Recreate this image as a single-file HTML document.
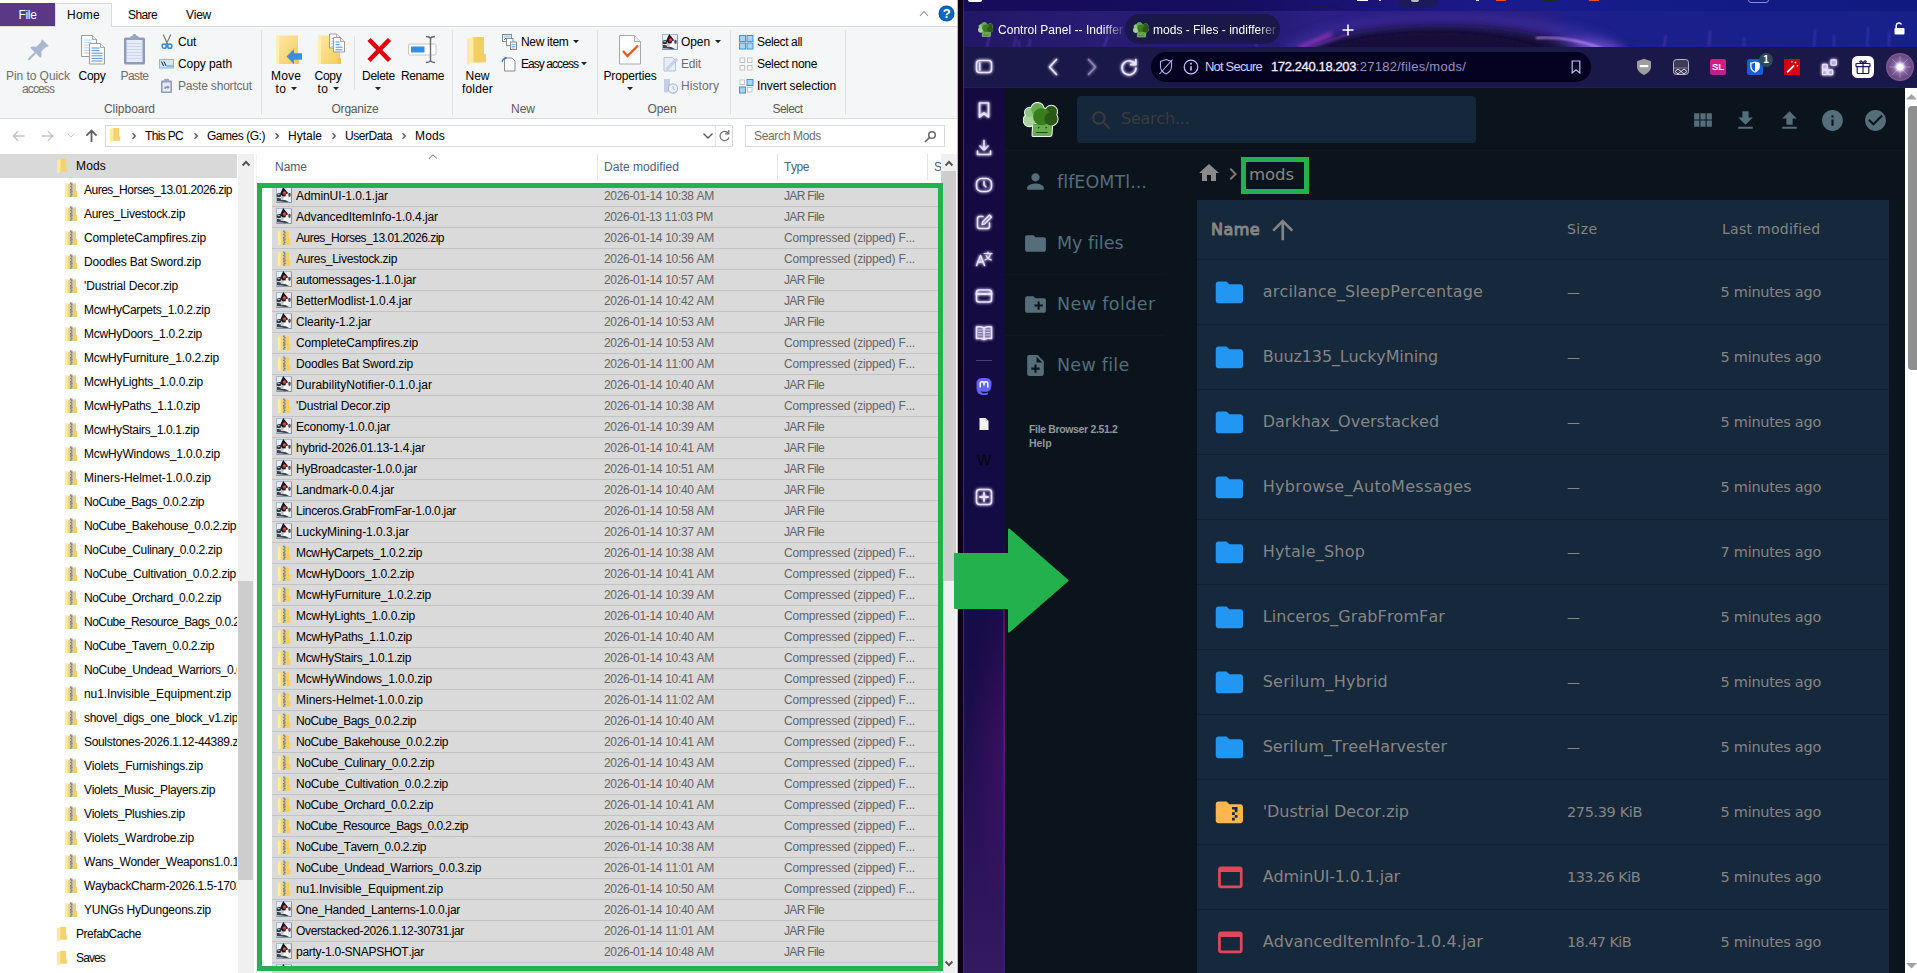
<!DOCTYPE html><html><head><meta charset="utf-8"><title>mods</title><style>
html,body{margin:0;padding:0}
body{width:1917px;height:973px;overflow:hidden;position:relative;background:#0b141d;font-family:"Liberation Sans",sans-serif;font-kerning:none}
div,svg,span.t{position:absolute}
span.t{white-space:pre;display:block}
span.dv{font-family:"DejaVu Sans","Liberation Sans",sans-serif}
svg{overflow:visible}
</style></head><body>
<svg width="0" height="0" style="position:absolute"><defs>
<linearGradient id="gfold" x1="0" y1="0" x2="1" y2="1"><stop offset="0" stop-color="#ffe9a6"/><stop offset="1" stop-color="#f4cd5e"/></linearGradient>
<linearGradient id="gsl" x1="0" y1="0" x2="0" y2="1"><stop offset="0" stop-color="#e0197d"/><stop offset="1" stop-color="#b5238f"/></linearGradient>
<radialGradient id="gava" cx=".5" cy=".5" r=".5"><stop offset="0" stop-color="#fff"/><stop offset=".18" stop-color="#e9dcff"/><stop offset=".45" stop-color="#8a6aa8"/><stop offset=".8" stop-color="#6a4a80"/><stop offset="1" stop-color="#7d5a96"/></radialGradient>
<filter id="glow" x="-60%" y="-60%" width="220%" height="220%"><feGaussianBlur stdDeviation="1.5" result="b"/><feComponentTransfer in="b" result="c"><feFuncA type="linear" slope="1.35"/></feComponentTransfer><feMerge><feMergeNode in="c"/><feMergeNode in="SourceGraphic"/></feMerge></filter>
<symbol id="zip" viewBox="0 0 16 16">
 <path d="M0 1.5h11v7.5h1.2v6H0z" fill="#f7d878"/>
 <path d="M0 1.5h2.6v13.5H0z" fill="#ffeaa8"/>
 <path d="M8.2 1.5h2.8v7.5h1.2v6H8.2z" fill="#f3cf66"/>
 <rect x="4.8" y="0.3" width="3" height="14.7" fill="#bfc0c2"/>
 <path d="M5.3 1.2h1.2M6.2 2.8h1.2M5.3 4.4h1.2M6.2 6h1.2M5.3 7.6h1.2M6.2 9.2h1.2M5.3 10.8h1.2M6.2 12.4h1.2M5.3 14h1.2" stroke="#55575a" stroke-width="1"/>
 <rect x="5.3" y="8.2" width="2" height="2.6" fill="#8d8f92"/>
</symbol>
<symbol id="jar" viewBox="0 0 16 16">
 <rect x=".5" y=".5" width="15" height="15" fill="#ebebf6" stroke="#a9b9cc"/>
 <path d="M.5 15.500h15M15.500 1v14.500" stroke="#7c97b0" fill="none"/>
 <path d="M1 10.800Q6 11.300 13 15H1z" fill="#3f4146"/>
 <path d="M1 13.900Q5 14 9 15H1z" fill="#b9bcc3"/>
 <path d="M5.300 6.600l5.300-.2 1.900 6.400H4.900z" fill="#fff"/>
 <path d="M5.300 6.600L8 6.500 7.400 12.800H4.900z" fill="#bfc1c6"/>
 <path d="M7.200 .1l5 6.100-2.100 1-.7 2.300-3-.2L4.300 6.500z" fill="#17181b"/>
 <path d="M.7 7Q2.500 5.500 5.200 6.400L5 9.600Q2.500 10.800 .7 9.400z" fill="#2f3135"/>
 <ellipse cx="2.700" cy="7.400" rx="1.300" ry=".75" fill="#8ec4f5"/>
 <ellipse cx="13.500" cy="7.800" rx="1.300" ry="2.100" fill="#4c4e53"/>
 <circle cx="8.500" cy="6" r="1.850" fill="#e8313a"/>
 <circle cx="8.400" cy="5.500" r=".8" fill="#ff5858"/>
</symbol>
<symbol id="fold" viewBox="0 0 11 15">
 <path d="M3 0h6.2v8.6h1v4.2H3z" fill="#f5d36c"/>
 <path d="M0 1.3L3.4 0v12.8L.9 14.6H0z" fill="#ffe9a4"/>
</symbol>
<symbol id="chev" viewBox="0 0 6 8"><path d="M1.500 1.200L4.300 4 1.500 6.800" fill="none" stroke="#5f5f5f" stroke-width="1.500"/></symbol>
<symbol id="dd" viewBox="0 0 6 4"><path d="M0 0h6L3 3.2z" fill="#222"/></symbol>
<symbol id="brocc" viewBox="0 0 36 36"><g fill="#f4f7f2" stroke="#f4f7f2" stroke-width="2" stroke-linejoin="round"><circle cx="6.600" cy="18.200" r="6"/><circle cx="6.800" cy="10.500" r="4.800"/><circle cx="14.500" cy="7.200" r="6.300"/><circle cx="18.700" cy="14.600" r="8.700"/><circle cx="28.300" cy="9.500" r="5.800"/><circle cx="28" cy="16.900" r="6.600"/><path d="M10.200 22H29.300L28.500 32.600Q28.300 34 27 34H10.600Q9.200 34 9.500 32.400z"/></g><circle cx="6.600" cy="18.200" r="6" fill="#a8d49c"/><circle cx="6.800" cy="10.500" r="4.800" fill="#8cc67f"/><circle cx="14.500" cy="7.200" r="6.300" fill="#66ab52"/><path d="M10.200 22H29.300L28.500 32.600Q28.300 34 27 34H10.600Q9.200 34 9.500 32.400z" fill="#6aad51"/><circle cx="28.300" cy="9.500" r="5.800" fill="#2c5a16"/><circle cx="18.700" cy="14.600" r="8.700" fill="#3a7d1e"/><circle cx="28" cy="16.900" r="6.600" fill="#2b5815"/><circle cx="15.600" cy="25.600" r=".85" fill="#27481a"/><circle cx="23.100" cy="25.600" r=".85" fill="#27481a"/><path d="M13.100 30.500h11.500" stroke="#27481a" stroke-width="1"/></symbol>
<symbol id="broccs" viewBox="0 0 36 36"><g fill="#dfe9da" stroke="#dfe9da" stroke-width="1.500" stroke-linejoin="round" opacity=".55"><circle cx="6.600" cy="18.200" r="6"/><circle cx="6.800" cy="10.500" r="4.800"/><circle cx="14.500" cy="7.200" r="6.300"/><circle cx="18.700" cy="14.600" r="8.700"/><circle cx="28.300" cy="9.500" r="5.800"/><circle cx="28" cy="16.900" r="6.600"/><path d="M10.200 22H29.300L28.500 32.600Q28.300 34 27 34H10.600Q9.200 34 9.500 32.400z"/></g><circle cx="6.600" cy="18.200" r="6" fill="#a8d49c"/><circle cx="6.800" cy="10.500" r="4.800" fill="#8cc67f"/><circle cx="14.500" cy="7.200" r="6.300" fill="#66ab52"/><path d="M10.200 22H29.300L28.500 32.600Q28.300 34 27 34H10.600Q9.200 34 9.500 32.400z" fill="#6aad51"/><circle cx="28.300" cy="9.500" r="5.800" fill="#2c5a16"/><circle cx="18.700" cy="14.600" r="8.700" fill="#3a7d1e"/><circle cx="28" cy="16.900" r="6.600" fill="#2b5815"/><circle cx="15.600" cy="25.600" r=".85" fill="#27481a"/><circle cx="23.100" cy="25.600" r=".85" fill="#27481a"/><path d="M13.100 30.500h11.500" stroke="#27481a" stroke-width="1"/></symbol>
</defs></svg>
<div id="ex" style="left:0;top:0;width:957px;height:973px;background:#fff;overflow:hidden"><div style="left:0px;top:26px;width:957px;height:93px;background:#f5f6f7;border-top:1px solid #dadbdc;border-bottom:1px solid #dadbdc;box-sizing:border-box;"></div><div style="left:0px;top:3px;width:55px;height:23px;background:#5a3885;"></div><div style="left:55px;top:3px;width:57px;height:24px;background:#f5f6f7;border:1px solid #dadbdc;border-bottom:none;box-sizing:border-box;"></div><span class="t" style="left:18.5px;top:5px;font-size:12px;line-height:20px;color:#fff;letter-spacing:-0.336px;">File</span><span class="t" style="left:67.0px;top:5px;font-size:12px;line-height:20px;color:#000;letter-spacing:0.246px;">Home</span><span class="t" style="left:128.0px;top:5px;font-size:12px;line-height:20px;color:#000;letter-spacing:-0.606px;">Share</span><span class="t" style="left:186.0px;top:5px;font-size:12px;line-height:20px;color:#000;letter-spacing:-0.254px;">View</span><svg style="left:919px;top:10px;" width="10" height="7" viewBox="0 0 10 7"><path d="M1 6L5 1.5 9 6" fill="none" stroke="#8a8a8a" stroke-width="1.1"/></svg><svg style="left:937.7px;top:5.4px;" width="17" height="17" viewBox="0 0 17 17"><circle cx="8.5" cy="8.5" r="8" fill="#0e69c2"/><circle cx="8.5" cy="8.5" r="7.2" fill="none" stroke="#0a4f9a" stroke-width=".8"/></svg><span class="t" style="left:942.8px;top:5px;font-size:13px;line-height:18px;color:#fff;letter-spacing:-0.953px;font-weight:700;">?</span><div style="left:261px;top:30px;width:1px;height:85px;background:#e1e2e3;"></div><div style="left:452px;top:30px;width:1px;height:85px;background:#e1e2e3;"></div><div style="left:597px;top:30px;width:1px;height:85px;background:#e1e2e3;"></div><div style="left:730px;top:30px;width:1px;height:85px;background:#e1e2e3;"></div><div style="left:845px;top:30px;width:1px;height:85px;background:#e1e2e3;"></div><div style="left:354px;top:36px;width:1px;height:54px;background:#e1e2e3;"></div><span class="t" style="left:104.0px;top:99px;font-size:12px;line-height:20px;color:#5a5a5a;letter-spacing:-0.042px;">Clipboard</span><span class="t" style="left:331.5px;top:99px;font-size:12px;line-height:20px;color:#5a5a5a;letter-spacing:-0.213px;">Organize</span><span class="t" style="left:511.0px;top:99px;font-size:12px;line-height:20px;color:#5a5a5a;letter-spacing:-0.005px;">New</span><span class="t" style="left:647.5px;top:99px;font-size:12px;line-height:20px;color:#5a5a5a;letter-spacing:-0.090px;">Open</span><span class="t" style="left:772.5px;top:99px;font-size:12px;line-height:20px;color:#5a5a5a;letter-spacing:-0.560px;">Select</span><svg style="left:23.7px;top:37.5px;" width="26" height="26" viewBox="0 0 24 24"><g transform="rotate(45 12 12)" fill="#a9b7d0"><path d="M7.500 1h9l-1.300 3.200v5.300l3.300 3v1.800h-13v-1.800l3.300-3V4.200z"/><rect x="11.100" y="14" width="1.900" height="9.500" rx=".8"/></g></svg><span class="t" style="left:6.0px;top:66px;font-size:12px;line-height:20px;color:#6d6d6d;letter-spacing:-0.059px;">Pin to Quick</span><span class="t" style="left:22.0px;top:79px;font-size:12px;line-height:20px;color:#6d6d6d;letter-spacing:-0.893px;">access</span><svg style="left:80px;top:34px;" width="27" height="32" viewBox="0 0 27 32"><path d="M1.5 1.5h11l4 4v17h-15z" fill="#fff" stroke="#9b9b9b" stroke-width="1"/><path d="M12.5 1.5v4h4" fill="#e8e8e8" stroke="#9b9b9b" stroke-width=".8"/><path d="M3.5 6.0h8" stroke="#bcd3f5" stroke-width="1.1"/><path d="M3.5 8.6h8" stroke="#bcd3f5" stroke-width="1.1"/><path d="M3.5 11.2h11" stroke="#bcd3f5" stroke-width="1.1"/><path d="M3.5 13.8h11" stroke="#bcd3f5" stroke-width="1.1"/><path d="M3.5 16.4h11" stroke="#bcd3f5" stroke-width="1.1"/><path d="M3.5 19.0h11" stroke="#bcd3f5" stroke-width="1.1"/><path d="M9.5 9.5h11l4 4v16.5h-15z" fill="#fff" stroke="#9b9b9b" stroke-width="1"/><path d="M20.5 9.5v4h4" fill="#e8e8e8" stroke="#9b9b9b" stroke-width=".8"/><path d="M11.5 14.0h8" stroke="#5b97ea" stroke-width="1.1"/><path d="M11.5 16.6h8" stroke="#5b97ea" stroke-width="1.1"/><path d="M11.5 19.2h11" stroke="#5b97ea" stroke-width="1.1"/><path d="M11.5 21.8h11" stroke="#5b97ea" stroke-width="1.1"/><path d="M11.5 24.4h11" stroke="#5b97ea" stroke-width="1.1"/><path d="M11.5 27.0h11" stroke="#5b97ea" stroke-width="1.1"/></svg><span class="t" style="left:78.5px;top:66px;font-size:12px;line-height:20px;color:#000;letter-spacing:-0.254px;">Copy</span><svg style="left:122px;top:33px;" width="26" height="33" viewBox="0 0 26 33"><rect x="2" y="4.500" width="21" height="27" rx="1.500" fill="#8e9bbb"/><rect x="4.500" y="7" width="16" height="22" fill="#e6ebf7"/><path d="M5 10.500h15M5 13.500h15M5 16.500h15M5 19.500h15M5 22.500h15M5 25.500h15" stroke="#cdd6ea" stroke-width="1"/><path d="M8 4.500c0-1 1-1.500 2.500-1.500 0-1.400 1-2 2-2s2 .6 2 2c1.500 0 2.500 .5 2.500 1.500v2.200H8z" fill="#9aa6c4"/></svg><span class="t" style="left:120.5px;top:66px;font-size:12px;line-height:20px;color:#6d6d6d;letter-spacing:-0.537px;">Paste</span><svg style="left:160px;top:34px;" width="14" height="16" viewBox="0 0 14 16"><path d="M3.200 .5l4.600 10M10.800 .5L6.200 10.500" stroke="#7a7a7a" stroke-width="1.200" fill="none"/><circle cx="4.200" cy="12.200" r="2.100" fill="none" stroke="#2b8ad6" stroke-width="1.500"/><circle cx="9.800" cy="12.200" r="2.100" fill="none" stroke="#2b8ad6" stroke-width="1.500"/></svg><span class="t" style="left:178.0px;top:32px;font-size:12px;line-height:20px;color:#000;letter-spacing:-0.229px;">Cut</span><svg style="left:159px;top:59px;" width="16" height="10" viewBox="0 0 16 10"><rect x=".5" y=".5" width="14" height="8.500" fill="#cfe6fb" stroke="#7fb8ea"/><path d="M2.500 2.500l2 4.500M5 2.500l2 4.500" stroke="#222" stroke-width="1"/><path d="M8.500 7h1M10.500 7h1M12.500 7h1" stroke="#222" stroke-width="1"/></svg><span class="t" style="left:178.0px;top:54px;font-size:12px;line-height:20px;color:#000;letter-spacing:-0.078px;">Copy path</span><svg style="left:160px;top:78px;" width="14" height="16" viewBox="0 0 14 16"><rect x="1" y="2.500" width="11" height="12.500" rx="1" fill="#8e9bbb"/><rect x="2.600" y="4.500" width="7.800" height="9" fill="#e9edf8"/><rect x="4" y=".8" width="5" height="3" rx="1" fill="#9aa6c4"/><path d="M4.500 11V8.500h3V7l2.200 2.300L7.500 11.500V10H6v1z" fill="#7f8fc0"/></svg><span class="t" style="left:178.0px;top:76px;font-size:12px;line-height:20px;color:#6d6d6d;letter-spacing:-0.194px;">Paste shortcut</span><svg style="left:275px;top:34px;" width="28" height="32" viewBox="0 0 28 32"><rect x="1" y="1.500" width="22" height="28.500" fill="url(#gfold)"/><rect x="1" y="1.500" width="3" height="28.500" fill="#ffeeb5"/><rect x="21" y="24" width="3" height="6" fill="#efc757"/><path d="M11.500 22.500l7.500-7.500v4.300h8v6.400h-8V30z" fill="#3a8fe0"/></svg><span class="t" style="left:271.0px;top:66px;font-size:12px;line-height:20px;color:#000;letter-spacing:0.164px;">Move</span><span class="t" style="left:275.5px;top:79px;font-size:12px;line-height:20px;color:#000;letter-spacing:0.492px;">to</span><svg style="left:291px;top:87px;" width="6" height="4"><use href="#dd"/></svg><svg style="left:317px;top:33px;" width="29" height="33" viewBox="0 0 29 33"><rect x="1" y="2.500" width="22" height="28.500" fill="url(#gfold)"/><rect x="1" y="2.500" width="3" height="28.500" fill="#ffeeb5"/><rect x="21" y="25" width="3" height="6" fill="#efc757"/><path d="M12.5 1h7l4 4v10h-11z" fill="#fff" stroke="#9b9b9b" stroke-width="1"/><path d="M19.5 1v4h4" fill="#e8e8e8" stroke="#9b9b9b" stroke-width=".8"/><path d="M14.5 5.5h4" stroke="#8fb5ee" stroke-width="1.1"/><path d="M14.5 8.1h4" stroke="#8fb5ee" stroke-width="1.1"/><path d="M14.5 10.7h7" stroke="#8fb5ee" stroke-width="1.1"/><path d="M14.5 13.3h7" stroke="#8fb5ee" stroke-width="1.1"/><path d="M16.5 4.5h7l4 4v10.5h-11z" fill="#fff" stroke="#9b9b9b" stroke-width="1"/><path d="M23.5 4.5v4h4" fill="#e8e8e8" stroke="#9b9b9b" stroke-width=".8"/><path d="M18.5 9.0h4" stroke="#5b97ea" stroke-width="1.1"/><path d="M18.5 11.6h4" stroke="#5b97ea" stroke-width="1.1"/><path d="M18.5 14.2h7" stroke="#5b97ea" stroke-width="1.1"/><path d="M18.5 16.8h7" stroke="#5b97ea" stroke-width="1.1"/></svg><span class="t" style="left:314.5px;top:66px;font-size:12px;line-height:20px;color:#000;letter-spacing:-0.254px;">Copy</span><span class="t" style="left:317.5px;top:79px;font-size:12px;line-height:20px;color:#000;letter-spacing:0.492px;">to</span><svg style="left:333px;top:87px;" width="6" height="4"><use href="#dd"/></svg><svg style="left:366px;top:37px;" width="26" height="26" viewBox="0 0 26 26"><path d="M3 2.500L23.500 23.500M23.500 2.500L3 23.500" stroke="#e3000f" stroke-width="4.600" fill="none"/></svg><span class="t" style="left:362.0px;top:66px;font-size:12px;line-height:20px;color:#000;letter-spacing:-0.281px;">Delete</span><svg style="left:375px;top:87px;" width="6" height="4"><use href="#dd"/></svg><svg style="left:407px;top:35px;" width="31" height="29" viewBox="0 0 31 29"><rect x="1.500" y="9" width="27.500" height="11" rx="1" fill="#fff" stroke="#c6c6c6"/><rect x="4" y="11.500" width="13.500" height="6" fill="#2f8ee5"/><path d="M19 1.500c2.500 0 4 .8 4.500 2 .5-1.200 2-2 4.500-2M19 27.500c2.500 0 4-.8 4.500-2 .5 1.200 2 2 4.500 2M23.500 3.500v22" fill="none" stroke="#6a6a6a" stroke-width="1.400"/></svg><span class="t" style="left:401.0px;top:66px;font-size:12px;line-height:20px;color:#000;letter-spacing:-0.393px;">Rename</span><svg style="left:466px;top:36px;" width="22" height="30" viewBox="0 0 22 30"><path d="M6.500 1h11.500v17h2v8.500H6.500z" fill="#f3cf63"/><path d="M1 2.800L7.500 1v24.500L3.500 28.500H1z" fill="#ffe9a4"/></svg><span class="t" style="left:465.5px;top:66px;font-size:12px;line-height:20px;color:#000;letter-spacing:-0.005px;">New</span><span class="t" style="left:462.0px;top:79px;font-size:12px;line-height:20px;color:#000;letter-spacing:0.161px;">folder</span><svg style="left:502px;top:34px;" width="16" height="16" viewBox="0 0 16 16"><rect x=".5" y=".5" width="9" height="7" fill="#fff" stroke="#8a8a8a"/><rect x="1.500" y="1.500" width="7" height="2" fill="#9fd0f5"/><path d="M2 6l2-2 1.500 1.500" stroke="#3da35a" fill="none"/><rect x="4.500" y="4.500" width="6.500" height="7" fill="#fff" stroke="#8a8a8a"/><rect x="8.500" y="8" width="6" height="7.500" fill="#fff" stroke="#8a8a8a"/><path d="M9.500 10.500h4M9.500 12.500h4" stroke="#79a8e8"/><path d="M9.500 14h4" stroke="#e89a9a"/></svg><span class="t" style="left:521.0px;top:32px;font-size:12px;line-height:20px;color:#000;letter-spacing:-0.314px;">New item</span><svg style="left:573px;top:40px;" width="6" height="4"><use href="#dd"/></svg><svg style="left:501px;top:56px;" width="16" height="16" viewBox="0 0 16 16"><path d="M3.500 2h7.500l3 3v10H3.500z" fill="#fff" stroke="#8a8a8a"/><path d="M1 6c.5-2.500 2-4 4.500-4.200" fill="none" stroke="#2f7fd8" stroke-width="1.300"/><path d="M3.500 .5l2.500 1.200-2 1.800z" fill="#2f7fd8"/></svg><span class="t" style="left:521.0px;top:54px;font-size:12px;line-height:20px;color:#000;letter-spacing:-0.942px;">Easy access</span><svg style="left:581px;top:62px;" width="6" height="4"><use href="#dd"/></svg><svg style="left:618px;top:34px;" width="24" height="32" viewBox="0 0 24 32"><path d="M1.500 1.500h15l6 6v22.500H1.500z" fill="#fff" stroke="#a9a9a9"/><path d="M16.500 1.500v6h6" fill="#eee" stroke="#a9a9a9"/><path d="M5 17l4.500 5L20 11.500" fill="none" stroke="#ea5a1e" stroke-width="2.400"/></svg><span class="t" style="left:603.5px;top:66px;font-size:12px;line-height:20px;color:#000;letter-spacing:-0.170px;">Properties</span><svg style="left:626.5px;top:87px;" width="6" height="4"><use href="#dd"/></svg><svg style="left:662px;top:34px;" width="16" height="16"><use href="#jar"/></svg><span class="t" style="left:681.0px;top:32px;font-size:12px;line-height:20px;color:#000;letter-spacing:-0.090px;">Open</span><svg style="left:714.5px;top:40px;" width="6" height="4"><use href="#dd"/></svg><svg style="left:663px;top:56px;" width="15" height="16" viewBox="0 0 15 16"><path d="M1 1.500h8.500l3 3v10.500H1z" fill="#e8edf8" stroke="#b5c0da"/><path d="M3 12.500L13 2.500l1.500 1.500L4.500 14z" fill="#cfd8ee" stroke="#aab6d4" stroke-width=".6"/></svg><span class="t" style="left:681.0px;top:54px;font-size:12px;line-height:20px;color:#6d6d6d;letter-spacing:-0.172px;">Edit</span><svg style="left:663px;top:78px;" width="16" height="16" viewBox="0 0 16 16"><path d="M1 1h6v11.500l-2.500 2H1z" fill="#c3cde6"/><circle cx="10" cy="10.500" r="4.600" fill="#eef1f9" stroke="#aab6d4" stroke-width="1.100"/><path d="M10 8v2.800l1.800 1" stroke="#aab6d4" fill="none"/></svg><span class="t" style="left:681.0px;top:76px;font-size:12px;line-height:20px;color:#6d6d6d;letter-spacing:0.094px;">History</span><svg style="left:738.5px;top:34.5px;" width="15" height="15" viewBox="0 0 15 15"><rect x="0.5" y="0.5" width="6" height="6" fill="#a6d5f8" stroke="#3596e6" stroke-width="1"/><rect x="8" y="0.5" width="6" height="6" fill="#a6d5f8" stroke="#3596e6" stroke-width="1"/><rect x="0.5" y="8" width="6" height="6" fill="#a6d5f8" stroke="#3596e6" stroke-width="1"/><rect x="8" y="8" width="6" height="6" fill="#a6d5f8" stroke="#3596e6" stroke-width="1"/></svg><span class="t" style="left:757.0px;top:32px;font-size:12px;line-height:20px;color:#000;letter-spacing:-0.370px;">Select all</span><svg style="left:738.5px;top:56.5px;" width="15" height="15" viewBox="0 0 15 15"><rect x="1.0" y="1.0" width="4.500" height="4.500" fill="#fff" stroke="#c4c4c4" stroke-width="1"/><rect x="8.5" y="1.0" width="4.500" height="4.500" fill="#fff" stroke="#c4c4c4" stroke-width="1"/><rect x="1.0" y="8.5" width="4.500" height="4.500" fill="#fff" stroke="#c4c4c4" stroke-width="1"/><rect x="8.5" y="8.5" width="4.500" height="4.500" fill="#fff" stroke="#c4c4c4" stroke-width="1"/></svg><span class="t" style="left:757.0px;top:54px;font-size:12px;line-height:20px;color:#000;letter-spacing:-0.308px;">Select none</span><svg style="left:738.5px;top:78.5px;" width="15" height="15" viewBox="0 0 15 15"><rect x="1.0" y="1.0" width="4.500" height="4.500" fill="#fff" stroke="#c4c4c4" stroke-width="1"/><rect x="8" y="0.5" width="6" height="6" fill="#a6d5f8" stroke="#3596e6" stroke-width="1"/><rect x="0.5" y="8" width="6" height="6" fill="#a6d5f8" stroke="#3596e6" stroke-width="1"/><rect x="8.5" y="8.5" width="4.500" height="4.500" fill="#fff" stroke="#c4c4c4" stroke-width="1"/></svg><span class="t" style="left:757.0px;top:76px;font-size:12px;line-height:20px;color:#000;letter-spacing:-0.107px;">Invert selection</span><svg style="left:12px;top:130px;" width="13" height="12" viewBox="0 0 13 12"><path d="M12.500 6H1.500M6 1.200L1.200 6 6 10.800" fill="none" stroke="#c4c4c4" stroke-width="1.300"/></svg><svg style="left:41px;top:130px;" width="13" height="12" viewBox="0 0 13 12"><path d="M.5 6h11M7 1.200L11.800 6 7 10.800" fill="none" stroke="#c4c4c4" stroke-width="1.300"/></svg><svg style="left:67px;top:133px;" width="8" height="5" viewBox="0 0 8 5"><path d="M.8 .8L4 4 7.200 .8" fill="none" stroke="#c9c9c9" stroke-width="1"/></svg><svg style="left:85px;top:129px;" width="13" height="14" viewBox="0 0 13 14"><path d="M6.500 13V1.800M1.400 6.700L6.500 1.600 11.600 6.700" fill="none" stroke="#616161" stroke-width="1.800"/></svg><div style="left:105px;top:125px;width:628px;height:22px;background:#fff;border:1px solid #d9d9d9;box-sizing:border-box;"></div><div style="left:715px;top:126px;width:1px;height:20px;background:#e5e5e5;"></div><svg style="left:110px;top:128px;" width="11" height="15"><use href="#fold"/></svg><svg style="left:131px;top:132px;" width="6" height="8"><use href="#chev"/></svg><span class="t" style="left:145.0px;top:126px;font-size:12px;line-height:20px;color:#000;letter-spacing:-0.670px;">This PC</span><svg style="left:193px;top:132px;" width="6" height="8"><use href="#chev"/></svg><span class="t" style="left:207.0px;top:126px;font-size:12px;line-height:20px;color:#000;letter-spacing:-0.467px;">Games (G:)</span><svg style="left:274px;top:132px;" width="6" height="8"><use href="#chev"/></svg><span class="t" style="left:288.0px;top:126px;font-size:12px;line-height:20px;color:#000;">Hytale</span><svg style="left:331px;top:132px;" width="6" height="8"><use href="#chev"/></svg><span class="t" style="left:345.0px;top:126px;font-size:12px;line-height:20px;color:#000;letter-spacing:-0.461px;">UserData</span><svg style="left:401px;top:132px;" width="6" height="8"><use href="#chev"/></svg><span class="t" style="left:415.0px;top:126px;font-size:12px;line-height:20px;color:#000;letter-spacing:0.164px;">Mods</span><svg style="left:702px;top:132px;" width="12" height="8" viewBox="0 0 12 8"><path d="M1.500 1.500L6 6 10.500 1.500" fill="none" stroke="#555" stroke-width="1.400"/></svg><svg style="left:718px;top:129px;" width="13" height="14" viewBox="0 0 13 14"><path d="M10.300 4.200A4.600 4.600 0 1 0 11 8.500" fill="none" stroke="#6a6a6a" stroke-width="1.200"/><path d="M10.800 1v3.800H7" fill="none" stroke="#6a6a6a" stroke-width="1.200"/></svg><div style="left:745px;top:125px;width:200px;height:22px;background:#fff;border:1px solid #d9d9d9;box-sizing:border-box;"></div><span class="t" style="left:754.0px;top:126px;font-size:12px;line-height:20px;color:#6d6d6d;letter-spacing:-0.337px;">Search Mods</span><svg style="left:923px;top:129px;" width="14" height="14" viewBox="0 0 14 14"><circle cx="9" cy="6" r="3.300" fill="none" stroke="#686868" stroke-width="1.500"/><path d="M6.700 8.400L1.900 13" stroke="#686868" stroke-width="1.700"/></svg><div style="left:0;top:154px;width:237px;height:819px;overflow:hidden"><div style="left:0px;top:0px;width:237px;height:24px;background:#d9d9d9;"></div><svg style="left:57px;top:5px;" width="11" height="15"><use href="#fold"/></svg><span class="t" style="left:76.0px;top:2px;font-size:12px;line-height:20px;color:#000;letter-spacing:0.164px;">Mods</span><svg style="left:65px;top:28px;" width="16" height="16"><use href="#zip"/></svg><span class="t" style="left:84.0px;top:26px;font-size:12px;line-height:20px;color:#000;letter-spacing:-0.498px;">Aures_Horses_13.01.2026.zip</span><svg style="left:65px;top:52px;" width="16" height="16"><use href="#zip"/></svg><span class="t" style="left:84.0px;top:50px;font-size:12px;line-height:20px;color:#000;letter-spacing:-0.301px;">Aures_Livestock.zip</span><svg style="left:65px;top:76px;" width="16" height="16"><use href="#zip"/></svg><span class="t" style="left:84.0px;top:74px;font-size:12px;line-height:20px;color:#000;letter-spacing:-0.129px;">CompleteCampfires.zip</span><svg style="left:65px;top:100px;" width="16" height="16"><use href="#zip"/></svg><span class="t" style="left:84.0px;top:98px;font-size:12px;line-height:20px;color:#000;letter-spacing:-0.210px;">Doodles Bat Sword.zip</span><svg style="left:65px;top:124px;" width="16" height="16"><use href="#zip"/></svg><span class="t" style="left:84.0px;top:122px;font-size:12px;line-height:20px;color:#000;letter-spacing:-0.157px;">'Dustrial Decor.zip</span><svg style="left:65px;top:148px;" width="16" height="16"><use href="#zip"/></svg><span class="t" style="left:84.0px;top:146px;font-size:12px;line-height:20px;color:#000;letter-spacing:-0.336px;">McwHyCarpets_1.0.2.zip</span><svg style="left:65px;top:172px;" width="16" height="16"><use href="#zip"/></svg><span class="t" style="left:84.0px;top:170px;font-size:12px;line-height:20px;color:#000;letter-spacing:-0.269px;">McwHyDoors_1.0.2.zip</span><svg style="left:65px;top:196px;" width="16" height="16"><use href="#zip"/></svg><span class="t" style="left:84.0px;top:194px;font-size:12px;line-height:20px;color:#000;letter-spacing:-0.183px;">McwHyFurniture_1.0.2.zip</span><svg style="left:65px;top:220px;" width="16" height="16"><use href="#zip"/></svg><span class="t" style="left:84.0px;top:218px;font-size:12px;line-height:20px;color:#000;letter-spacing:-0.209px;">McwHyLights_1.0.0.zip</span><svg style="left:65px;top:244px;" width="16" height="16"><use href="#zip"/></svg><span class="t" style="left:84.0px;top:242px;font-size:12px;line-height:20px;color:#000;letter-spacing:-0.303px;">McwHyPaths_1.1.0.zip</span><svg style="left:65px;top:268px;" width="16" height="16"><use href="#zip"/></svg><span class="t" style="left:84.0px;top:266px;font-size:12px;line-height:20px;color:#000;letter-spacing:-0.336px;">McwHyStairs_1.0.1.zip</span><svg style="left:65px;top:292px;" width="16" height="16"><use href="#zip"/></svg><span class="t" style="left:84.0px;top:290px;font-size:12px;line-height:20px;color:#000;letter-spacing:-0.184px;">McwHyWindows_1.0.0.zip</span><svg style="left:65px;top:316px;" width="16" height="16"><use href="#zip"/></svg><span class="t" style="left:84.0px;top:314px;font-size:12px;line-height:20px;color:#000;letter-spacing:-0.016px;">Miners-Helmet-1.0.0.zip</span><svg style="left:65px;top:340px;" width="16" height="16"><use href="#zip"/></svg><span class="t" style="left:84.0px;top:338px;font-size:12px;line-height:20px;color:#000;letter-spacing:-0.481px;">NoCube_Bags_0.0.2.zip</span><svg style="left:65px;top:364px;" width="16" height="16"><use href="#zip"/></svg><span class="t" style="left:84.0px;top:362px;font-size:12px;line-height:20px;color:#000;letter-spacing:-0.415px;">NoCube_Bakehouse_0.0.2.zip</span><svg style="left:65px;top:388px;" width="16" height="16"><use href="#zip"/></svg><span class="t" style="left:84.0px;top:386px;font-size:12px;line-height:20px;color:#000;letter-spacing:-0.351px;">NoCube_Culinary_0.0.2.zip</span><svg style="left:65px;top:412px;" width="16" height="16"><use href="#zip"/></svg><span class="t" style="left:84.0px;top:410px;font-size:12px;line-height:20px;color:#000;letter-spacing:-0.242px;">NoCube_Cultivation_0.0.2.zip</span><svg style="left:65px;top:436px;" width="16" height="16"><use href="#zip"/></svg><span class="t" style="left:84.0px;top:434px;font-size:12px;line-height:20px;color:#000;letter-spacing:-0.379px;">NoCube_Orchard_0.0.2.zip</span><svg style="left:65px;top:460px;" width="16" height="16"><use href="#zip"/></svg><span class="t" style="left:84.0px;top:458px;font-size:12px;line-height:20px;color:#000;letter-spacing:-0.537px;">NoCube_Resource_Bags_0.0.2.zip</span><svg style="left:65px;top:484px;" width="16" height="16"><use href="#zip"/></svg><span class="t" style="left:84.0px;top:482px;font-size:12px;line-height:20px;color:#000;letter-spacing:-0.439px;">NoCube_Tavern_0.0.2.zip</span><svg style="left:65px;top:508px;" width="16" height="16"><use href="#zip"/></svg><span class="t" style="left:84.0px;top:506px;font-size:12px;line-height:20px;color:#000;letter-spacing:-0.368px;">NoCube_Undead_Warriors_0.0.3.zip</span><svg style="left:65px;top:532px;" width="16" height="16"><use href="#zip"/></svg><span class="t" style="left:84.0px;top:530px;font-size:12px;line-height:20px;color:#000;letter-spacing:-0.090px;">nu1.Invisible_Equipment.zip</span><svg style="left:65px;top:556px;" width="16" height="16"><use href="#zip"/></svg><span class="t" style="left:84.0px;top:554px;font-size:12px;line-height:20px;color:#000;letter-spacing:-0.314px;">shovel_digs_one_block_v1.zip</span><svg style="left:65px;top:580px;" width="16" height="16"><use href="#zip"/></svg><span class="t" style="left:84.0px;top:578px;font-size:12px;line-height:20px;color:#000;letter-spacing:-0.327px;">Soulstones-2026.1.12-44389.zip</span><svg style="left:65px;top:604px;" width="16" height="16"><use href="#zip"/></svg><span class="t" style="left:84.0px;top:602px;font-size:12px;line-height:20px;color:#000;letter-spacing:-0.192px;">Violets_Furnishings.zip</span><svg style="left:65px;top:628px;" width="16" height="16"><use href="#zip"/></svg><span class="t" style="left:84.0px;top:626px;font-size:12px;line-height:20px;color:#000;letter-spacing:-0.336px;">Violets_Music_Players.zip</span><svg style="left:65px;top:652px;" width="16" height="16"><use href="#zip"/></svg><span class="t" style="left:84.0px;top:650px;font-size:12px;line-height:20px;color:#000;letter-spacing:-0.287px;">Violets_Plushies.zip</span><svg style="left:65px;top:676px;" width="16" height="16"><use href="#zip"/></svg><span class="t" style="left:84.0px;top:674px;font-size:12px;line-height:20px;color:#000;letter-spacing:-0.203px;">Violets_Wardrobe.zip</span><svg style="left:65px;top:700px;" width="16" height="16"><use href="#zip"/></svg><span class="t" style="left:84.0px;top:698px;font-size:12px;line-height:20px;color:#000;letter-spacing:-0.361px;">Wans_Wonder_Weapons1.0.1.zip</span><svg style="left:65px;top:724px;" width="16" height="16"><use href="#zip"/></svg><span class="t" style="left:84.0px;top:722px;font-size:12px;line-height:20px;color:#000;letter-spacing:-0.326px;">WaybackCharm-2026.1.5-17020.zip</span><svg style="left:65px;top:748px;" width="16" height="16"><use href="#zip"/></svg><span class="t" style="left:84.0px;top:746px;font-size:12px;line-height:20px;color:#000;letter-spacing:-0.253px;">YUNGs HyDungeons.zip</span><svg style="left:57px;top:773px;" width="11" height="15"><use href="#fold"/></svg><span class="t" style="left:76.0px;top:770px;font-size:12px;line-height:20px;color:#000;letter-spacing:-0.459px;">PrefabCache</span><svg style="left:57px;top:797px;" width="11" height="15"><use href="#fold"/></svg><span class="t" style="left:76.0px;top:794px;font-size:12px;line-height:20px;color:#000;letter-spacing:-0.872px;">Saves</span></div><div style="left:238px;top:154px;width:16px;height:819px;background:#f0f0f0;"></div><svg style="left:240.5px;top:158.5px;" width="10" height="8" viewBox="0 0 10 8"><path d="M1.600 6.500L5 2.900 8.400 6.500" fill="none" stroke="#505050" stroke-width="1.900"/></svg><div style="left:238px;top:581px;width:15px;height:299px;background:#cdcdcd;"></div><div style="left:256px;top:154px;width:1px;height:819px;background:#f3f3f3;"></div><span class="t" style="left:275.0px;top:157px;font-size:12px;line-height:20px;color:#4c607a;">Name</span><svg style="left:428px;top:154px;" width="10" height="5" viewBox="0 0 10 5"><path d="M1 4.500L5 .8 9 4.500" fill="none" stroke="#7a7a7a" stroke-width="1"/></svg><div style="left:597px;top:154px;width:1px;height:26px;background:#e5e5e5;"></div><div style="left:777px;top:154px;width:1px;height:26px;background:#e5e5e5;"></div><div style="left:927px;top:154px;width:1px;height:26px;background:#e5e5e5;"></div><span class="t" style="left:604.0px;top:157px;font-size:12px;line-height:20px;color:#4c607a;letter-spacing:0.073px;">Date modified</span><span class="t" style="left:784.0px;top:157px;font-size:12px;line-height:20px;color:#4c607a;letter-spacing:-0.422px;">Type</span><span class="t" style="left:934.0px;top:157px;font-size:12px;line-height:20px;color:#4c607a;letter-spacing:-2.016px;">S</span><div style="left:272px;top:185px;width:670px;height:788px;overflow:hidden;background:#dadada"><div style="left:0px;top:21px;width:670px;height:1px;background:#c3c3c3;"></div><div style="left:0px;top:42px;width:670px;height:1px;background:#c3c3c3;"></div><div style="left:0px;top:63px;width:670px;height:1px;background:#c3c3c3;"></div><div style="left:0px;top:84px;width:670px;height:1px;background:#c3c3c3;"></div><div style="left:0px;top:105px;width:670px;height:1px;background:#c3c3c3;"></div><div style="left:0px;top:126px;width:670px;height:1px;background:#c3c3c3;"></div><div style="left:0px;top:147px;width:670px;height:1px;background:#c3c3c3;"></div><div style="left:0px;top:168px;width:670px;height:1px;background:#c3c3c3;"></div><div style="left:0px;top:189px;width:670px;height:1px;background:#c3c3c3;"></div><div style="left:0px;top:210px;width:670px;height:1px;background:#c3c3c3;"></div><div style="left:0px;top:231px;width:670px;height:1px;background:#c3c3c3;"></div><div style="left:0px;top:252px;width:670px;height:1px;background:#c3c3c3;"></div><div style="left:0px;top:273px;width:670px;height:1px;background:#c3c3c3;"></div><div style="left:0px;top:294px;width:670px;height:1px;background:#c3c3c3;"></div><div style="left:0px;top:315px;width:670px;height:1px;background:#c3c3c3;"></div><div style="left:0px;top:336px;width:670px;height:1px;background:#c3c3c3;"></div><div style="left:0px;top:357px;width:670px;height:1px;background:#c3c3c3;"></div><div style="left:0px;top:378px;width:670px;height:1px;background:#c3c3c3;"></div><div style="left:0px;top:399px;width:670px;height:1px;background:#c3c3c3;"></div><div style="left:0px;top:420px;width:670px;height:1px;background:#c3c3c3;"></div><div style="left:0px;top:441px;width:670px;height:1px;background:#c3c3c3;"></div><div style="left:0px;top:462px;width:670px;height:1px;background:#c3c3c3;"></div><div style="left:0px;top:483px;width:670px;height:1px;background:#c3c3c3;"></div><div style="left:0px;top:504px;width:670px;height:1px;background:#c3c3c3;"></div><div style="left:0px;top:525px;width:670px;height:1px;background:#c3c3c3;"></div><div style="left:0px;top:546px;width:670px;height:1px;background:#c3c3c3;"></div><div style="left:0px;top:567px;width:670px;height:1px;background:#c3c3c3;"></div><div style="left:0px;top:588px;width:670px;height:1px;background:#c3c3c3;"></div><div style="left:0px;top:609px;width:670px;height:1px;background:#c3c3c3;"></div><div style="left:0px;top:630px;width:670px;height:1px;background:#c3c3c3;"></div><div style="left:0px;top:651px;width:670px;height:1px;background:#c3c3c3;"></div><div style="left:0px;top:672px;width:670px;height:1px;background:#c3c3c3;"></div><div style="left:0px;top:693px;width:670px;height:1px;background:#c3c3c3;"></div><div style="left:0px;top:714px;width:670px;height:1px;background:#c3c3c3;"></div><div style="left:0px;top:735px;width:670px;height:1px;background:#c3c3c3;"></div><div style="left:0px;top:756px;width:670px;height:1px;background:#c3c3c3;"></div><div style="left:0px;top:777px;width:670px;height:1px;background:#c3c3c3;"></div><div style="left:0px;top:798px;width:670px;height:1px;background:#c3c3c3;"></div><svg style="left:4px;top:2px;" width="16" height="16"><use href="#jar"/></svg><span class="t" style="left:24.0px;top:1px;font-size:12px;line-height:20px;color:#000;letter-spacing:-0.081px;">AdminUI-1.0.1.jar</span><span class="t" style="left:332.0px;top:1px;font-size:12px;line-height:20px;color:#646464;letter-spacing:-0.321px;">2026-01-14 10:38 AM</span><span class="t" style="left:512.0px;top:1px;font-size:12px;line-height:20px;color:#646464;letter-spacing:-0.668px;">JAR File</span><svg style="left:4px;top:23px;" width="16" height="16"><use href="#jar"/></svg><span class="t" style="left:24.0px;top:22px;font-size:12px;line-height:20px;color:#000;letter-spacing:-0.081px;">AdvancedItemInfo-1.0.4.jar</span><span class="t" style="left:332.0px;top:22px;font-size:12px;line-height:20px;color:#646464;letter-spacing:-0.373px;">2026-01-13 11:03 PM</span><span class="t" style="left:512.0px;top:22px;font-size:12px;line-height:20px;color:#646464;letter-spacing:-0.668px;">JAR File</span><svg style="left:6px;top:44.5px;" width="16" height="16"><use href="#zip"/></svg><span class="t" style="left:24.0px;top:43px;font-size:12px;line-height:20px;color:#000;letter-spacing:-0.498px;">Aures_Horses_13.01.2026.zip</span><span class="t" style="left:332.0px;top:43px;font-size:12px;line-height:20px;color:#646464;letter-spacing:-0.321px;">2026-01-14 10:39 AM</span><span class="t" style="left:512.0px;top:43px;font-size:12px;line-height:20px;color:#646464;letter-spacing:-0.183px;">Compressed (zipped) F...</span><svg style="left:6px;top:65.5px;" width="16" height="16"><use href="#zip"/></svg><span class="t" style="left:24.0px;top:64px;font-size:12px;line-height:20px;color:#000;letter-spacing:-0.301px;">Aures_Livestock.zip</span><span class="t" style="left:332.0px;top:64px;font-size:12px;line-height:20px;color:#646464;letter-spacing:-0.321px;">2026-01-14 10:56 AM</span><span class="t" style="left:512.0px;top:64px;font-size:12px;line-height:20px;color:#646464;letter-spacing:-0.183px;">Compressed (zipped) F...</span><svg style="left:4px;top:86px;" width="16" height="16"><use href="#jar"/></svg><span class="t" style="left:24.0px;top:85px;font-size:12px;line-height:20px;color:#000;letter-spacing:-0.246px;">automessages-1.1.0.jar</span><span class="t" style="left:332.0px;top:85px;font-size:12px;line-height:20px;color:#646464;letter-spacing:-0.321px;">2026-01-14 10:57 AM</span><span class="t" style="left:512.0px;top:85px;font-size:12px;line-height:20px;color:#646464;letter-spacing:-0.668px;">JAR File</span><svg style="left:4px;top:107px;" width="16" height="16"><use href="#jar"/></svg><span class="t" style="left:24.0px;top:106px;font-size:12px;line-height:20px;color:#000;letter-spacing:-0.060px;">BetterModlist-1.0.4.jar</span><span class="t" style="left:332.0px;top:106px;font-size:12px;line-height:20px;color:#646464;letter-spacing:-0.321px;">2026-01-14 10:42 AM</span><span class="t" style="left:512.0px;top:106px;font-size:12px;line-height:20px;color:#646464;letter-spacing:-0.668px;">JAR File</span><svg style="left:4px;top:128px;" width="16" height="16"><use href="#jar"/></svg><span class="t" style="left:24.0px;top:127px;font-size:12px;line-height:20px;color:#000;letter-spacing:-0.189px;">Clearity-1.2.jar</span><span class="t" style="left:332.0px;top:127px;font-size:12px;line-height:20px;color:#646464;letter-spacing:-0.321px;">2026-01-14 10:53 AM</span><span class="t" style="left:512.0px;top:127px;font-size:12px;line-height:20px;color:#646464;letter-spacing:-0.668px;">JAR File</span><svg style="left:6px;top:149.5px;" width="16" height="16"><use href="#zip"/></svg><span class="t" style="left:24.0px;top:148px;font-size:12px;line-height:20px;color:#000;letter-spacing:-0.129px;">CompleteCampfires.zip</span><span class="t" style="left:332.0px;top:148px;font-size:12px;line-height:20px;color:#646464;letter-spacing:-0.321px;">2026-01-14 10:53 AM</span><span class="t" style="left:512.0px;top:148px;font-size:12px;line-height:20px;color:#646464;letter-spacing:-0.183px;">Compressed (zipped) F...</span><svg style="left:6px;top:170.5px;" width="16" height="16"><use href="#zip"/></svg><span class="t" style="left:24.0px;top:169px;font-size:12px;line-height:20px;color:#000;letter-spacing:-0.210px;">Doodles Bat Sword.zip</span><span class="t" style="left:332.0px;top:169px;font-size:12px;line-height:20px;color:#646464;letter-spacing:-0.321px;">2026-01-14 11:00 AM</span><span class="t" style="left:512.0px;top:169px;font-size:12px;line-height:20px;color:#646464;letter-spacing:-0.183px;">Compressed (zipped) F...</span><svg style="left:4px;top:191px;" width="16" height="16"><use href="#jar"/></svg><span class="t" style="left:24.0px;top:190px;font-size:12px;line-height:20px;color:#000;letter-spacing:0.022px;">DurabilityNotifier-0.1.0.jar</span><span class="t" style="left:332.0px;top:190px;font-size:12px;line-height:20px;color:#646464;letter-spacing:-0.321px;">2026-01-14 10:40 AM</span><span class="t" style="left:512.0px;top:190px;font-size:12px;line-height:20px;color:#646464;letter-spacing:-0.668px;">JAR File</span><svg style="left:6px;top:212.5px;" width="16" height="16"><use href="#zip"/></svg><span class="t" style="left:24.0px;top:211px;font-size:12px;line-height:20px;color:#000;letter-spacing:-0.157px;">'Dustrial Decor.zip</span><span class="t" style="left:332.0px;top:211px;font-size:12px;line-height:20px;color:#646464;letter-spacing:-0.321px;">2026-01-14 10:38 AM</span><span class="t" style="left:512.0px;top:211px;font-size:12px;line-height:20px;color:#646464;letter-spacing:-0.183px;">Compressed (zipped) F...</span><svg style="left:4px;top:233px;" width="16" height="16"><use href="#jar"/></svg><span class="t" style="left:24.0px;top:232px;font-size:12px;line-height:20px;color:#000;letter-spacing:-0.199px;">Economy-1.0.0.jar</span><span class="t" style="left:332.0px;top:232px;font-size:12px;line-height:20px;color:#646464;letter-spacing:-0.321px;">2026-01-14 10:39 AM</span><span class="t" style="left:512.0px;top:232px;font-size:12px;line-height:20px;color:#646464;letter-spacing:-0.668px;">JAR File</span><svg style="left:4px;top:254px;" width="16" height="16"><use href="#jar"/></svg><span class="t" style="left:24.0px;top:253px;font-size:12px;line-height:20px;color:#000;letter-spacing:-0.204px;">hybrid-2026.01.13-1.4.jar</span><span class="t" style="left:332.0px;top:253px;font-size:12px;line-height:20px;color:#646464;letter-spacing:-0.321px;">2026-01-14 10:41 AM</span><span class="t" style="left:512.0px;top:253px;font-size:12px;line-height:20px;color:#646464;letter-spacing:-0.668px;">JAR File</span><svg style="left:4px;top:275px;" width="16" height="16"><use href="#jar"/></svg><span class="t" style="left:24.0px;top:274px;font-size:12px;line-height:20px;color:#000;letter-spacing:-0.249px;">HyBroadcaster-1.0.0.jar</span><span class="t" style="left:332.0px;top:274px;font-size:12px;line-height:20px;color:#646464;letter-spacing:-0.321px;">2026-01-14 10:51 AM</span><span class="t" style="left:512.0px;top:274px;font-size:12px;line-height:20px;color:#646464;letter-spacing:-0.668px;">JAR File</span><svg style="left:4px;top:296px;" width="16" height="16"><use href="#jar"/></svg><span class="t" style="left:24.0px;top:295px;font-size:12px;line-height:20px;color:#000;letter-spacing:-0.151px;">Landmark-0.0.4.jar</span><span class="t" style="left:332.0px;top:295px;font-size:12px;line-height:20px;color:#646464;letter-spacing:-0.321px;">2026-01-14 10:40 AM</span><span class="t" style="left:512.0px;top:295px;font-size:12px;line-height:20px;color:#646464;letter-spacing:-0.668px;">JAR File</span><svg style="left:4px;top:317px;" width="16" height="16"><use href="#jar"/></svg><span class="t" style="left:24.0px;top:316px;font-size:12px;line-height:20px;color:#000;letter-spacing:-0.291px;">Linceros.GrabFromFar-1.0.0.jar</span><span class="t" style="left:332.0px;top:316px;font-size:12px;line-height:20px;color:#646464;letter-spacing:-0.321px;">2026-01-14 10:58 AM</span><span class="t" style="left:512.0px;top:316px;font-size:12px;line-height:20px;color:#646464;letter-spacing:-0.668px;">JAR File</span><svg style="left:4px;top:338px;" width="16" height="16"><use href="#jar"/></svg><span class="t" style="left:24.0px;top:337px;font-size:12px;line-height:20px;color:#000;letter-spacing:-0.051px;">LuckyMining-1.0.3.jar</span><span class="t" style="left:332.0px;top:337px;font-size:12px;line-height:20px;color:#646464;letter-spacing:-0.321px;">2026-01-14 10:37 AM</span><span class="t" style="left:512.0px;top:337px;font-size:12px;line-height:20px;color:#646464;letter-spacing:-0.668px;">JAR File</span><svg style="left:6px;top:359.5px;" width="16" height="16"><use href="#zip"/></svg><span class="t" style="left:24.0px;top:358px;font-size:12px;line-height:20px;color:#000;letter-spacing:-0.336px;">McwHyCarpets_1.0.2.zip</span><span class="t" style="left:332.0px;top:358px;font-size:12px;line-height:20px;color:#646464;letter-spacing:-0.321px;">2026-01-14 10:38 AM</span><span class="t" style="left:512.0px;top:358px;font-size:12px;line-height:20px;color:#646464;letter-spacing:-0.183px;">Compressed (zipped) F...</span><svg style="left:6px;top:380.5px;" width="16" height="16"><use href="#zip"/></svg><span class="t" style="left:24.0px;top:379px;font-size:12px;line-height:20px;color:#000;letter-spacing:-0.269px;">McwHyDoors_1.0.2.zip</span><span class="t" style="left:332.0px;top:379px;font-size:12px;line-height:20px;color:#646464;letter-spacing:-0.321px;">2026-01-14 10:41 AM</span><span class="t" style="left:512.0px;top:379px;font-size:12px;line-height:20px;color:#646464;letter-spacing:-0.183px;">Compressed (zipped) F...</span><svg style="left:6px;top:401.5px;" width="16" height="16"><use href="#zip"/></svg><span class="t" style="left:24.0px;top:400px;font-size:12px;line-height:20px;color:#000;letter-spacing:-0.183px;">McwHyFurniture_1.0.2.zip</span><span class="t" style="left:332.0px;top:400px;font-size:12px;line-height:20px;color:#646464;letter-spacing:-0.321px;">2026-01-14 10:39 AM</span><span class="t" style="left:512.0px;top:400px;font-size:12px;line-height:20px;color:#646464;letter-spacing:-0.183px;">Compressed (zipped) F...</span><svg style="left:6px;top:422.5px;" width="16" height="16"><use href="#zip"/></svg><span class="t" style="left:24.0px;top:421px;font-size:12px;line-height:20px;color:#000;letter-spacing:-0.209px;">McwHyLights_1.0.0.zip</span><span class="t" style="left:332.0px;top:421px;font-size:12px;line-height:20px;color:#646464;letter-spacing:-0.321px;">2026-01-14 10:40 AM</span><span class="t" style="left:512.0px;top:421px;font-size:12px;line-height:20px;color:#646464;letter-spacing:-0.183px;">Compressed (zipped) F...</span><svg style="left:6px;top:443.5px;" width="16" height="16"><use href="#zip"/></svg><span class="t" style="left:24.0px;top:442px;font-size:12px;line-height:20px;color:#000;letter-spacing:-0.303px;">McwHyPaths_1.1.0.zip</span><span class="t" style="left:332.0px;top:442px;font-size:12px;line-height:20px;color:#646464;letter-spacing:-0.321px;">2026-01-14 10:40 AM</span><span class="t" style="left:512.0px;top:442px;font-size:12px;line-height:20px;color:#646464;letter-spacing:-0.183px;">Compressed (zipped) F...</span><svg style="left:6px;top:464.5px;" width="16" height="16"><use href="#zip"/></svg><span class="t" style="left:24.0px;top:463px;font-size:12px;line-height:20px;color:#000;letter-spacing:-0.336px;">McwHyStairs_1.0.1.zip</span><span class="t" style="left:332.0px;top:463px;font-size:12px;line-height:20px;color:#646464;letter-spacing:-0.321px;">2026-01-14 10:43 AM</span><span class="t" style="left:512.0px;top:463px;font-size:12px;line-height:20px;color:#646464;letter-spacing:-0.183px;">Compressed (zipped) F...</span><svg style="left:6px;top:485.5px;" width="16" height="16"><use href="#zip"/></svg><span class="t" style="left:24.0px;top:484px;font-size:12px;line-height:20px;color:#000;letter-spacing:-0.184px;">McwHyWindows_1.0.0.zip</span><span class="t" style="left:332.0px;top:484px;font-size:12px;line-height:20px;color:#646464;letter-spacing:-0.321px;">2026-01-14 10:41 AM</span><span class="t" style="left:512.0px;top:484px;font-size:12px;line-height:20px;color:#646464;letter-spacing:-0.183px;">Compressed (zipped) F...</span><svg style="left:6px;top:506.5px;" width="16" height="16"><use href="#zip"/></svg><span class="t" style="left:24.0px;top:505px;font-size:12px;line-height:20px;color:#000;letter-spacing:-0.016px;">Miners-Helmet-1.0.0.zip</span><span class="t" style="left:332.0px;top:505px;font-size:12px;line-height:20px;color:#646464;letter-spacing:-0.321px;">2026-01-14 11:02 AM</span><span class="t" style="left:512.0px;top:505px;font-size:12px;line-height:20px;color:#646464;letter-spacing:-0.183px;">Compressed (zipped) F...</span><svg style="left:6px;top:527.5px;" width="16" height="16"><use href="#zip"/></svg><span class="t" style="left:24.0px;top:526px;font-size:12px;line-height:20px;color:#000;letter-spacing:-0.481px;">NoCube_Bags_0.0.2.zip</span><span class="t" style="left:332.0px;top:526px;font-size:12px;line-height:20px;color:#646464;letter-spacing:-0.321px;">2026-01-14 10:40 AM</span><span class="t" style="left:512.0px;top:526px;font-size:12px;line-height:20px;color:#646464;letter-spacing:-0.183px;">Compressed (zipped) F...</span><svg style="left:6px;top:548.5px;" width="16" height="16"><use href="#zip"/></svg><span class="t" style="left:24.0px;top:547px;font-size:12px;line-height:20px;color:#000;letter-spacing:-0.415px;">NoCube_Bakehouse_0.0.2.zip</span><span class="t" style="left:332.0px;top:547px;font-size:12px;line-height:20px;color:#646464;letter-spacing:-0.321px;">2026-01-14 10:41 AM</span><span class="t" style="left:512.0px;top:547px;font-size:12px;line-height:20px;color:#646464;letter-spacing:-0.183px;">Compressed (zipped) F...</span><svg style="left:6px;top:569.5px;" width="16" height="16"><use href="#zip"/></svg><span class="t" style="left:24.0px;top:568px;font-size:12px;line-height:20px;color:#000;letter-spacing:-0.351px;">NoCube_Culinary_0.0.2.zip</span><span class="t" style="left:332.0px;top:568px;font-size:12px;line-height:20px;color:#646464;letter-spacing:-0.321px;">2026-01-14 10:43 AM</span><span class="t" style="left:512.0px;top:568px;font-size:12px;line-height:20px;color:#646464;letter-spacing:-0.183px;">Compressed (zipped) F...</span><svg style="left:6px;top:590.5px;" width="16" height="16"><use href="#zip"/></svg><span class="t" style="left:24.0px;top:589px;font-size:12px;line-height:20px;color:#000;letter-spacing:-0.242px;">NoCube_Cultivation_0.0.2.zip</span><span class="t" style="left:332.0px;top:589px;font-size:12px;line-height:20px;color:#646464;letter-spacing:-0.321px;">2026-01-14 10:40 AM</span><span class="t" style="left:512.0px;top:589px;font-size:12px;line-height:20px;color:#646464;letter-spacing:-0.183px;">Compressed (zipped) F...</span><svg style="left:6px;top:611.5px;" width="16" height="16"><use href="#zip"/></svg><span class="t" style="left:24.0px;top:610px;font-size:12px;line-height:20px;color:#000;letter-spacing:-0.379px;">NoCube_Orchard_0.0.2.zip</span><span class="t" style="left:332.0px;top:610px;font-size:12px;line-height:20px;color:#646464;letter-spacing:-0.321px;">2026-01-14 10:41 AM</span><span class="t" style="left:512.0px;top:610px;font-size:12px;line-height:20px;color:#646464;letter-spacing:-0.183px;">Compressed (zipped) F...</span><svg style="left:6px;top:632.5px;" width="16" height="16"><use href="#zip"/></svg><span class="t" style="left:24.0px;top:631px;font-size:12px;line-height:20px;color:#000;letter-spacing:-0.537px;">NoCube_Resource_Bags_0.0.2.zip</span><span class="t" style="left:332.0px;top:631px;font-size:12px;line-height:20px;color:#646464;letter-spacing:-0.321px;">2026-01-14 10:43 AM</span><span class="t" style="left:512.0px;top:631px;font-size:12px;line-height:20px;color:#646464;letter-spacing:-0.183px;">Compressed (zipped) F...</span><svg style="left:6px;top:653.5px;" width="16" height="16"><use href="#zip"/></svg><span class="t" style="left:24.0px;top:652px;font-size:12px;line-height:20px;color:#000;letter-spacing:-0.439px;">NoCube_Tavern_0.0.2.zip</span><span class="t" style="left:332.0px;top:652px;font-size:12px;line-height:20px;color:#646464;letter-spacing:-0.321px;">2026-01-14 10:38 AM</span><span class="t" style="left:512.0px;top:652px;font-size:12px;line-height:20px;color:#646464;letter-spacing:-0.183px;">Compressed (zipped) F...</span><svg style="left:6px;top:674.5px;" width="16" height="16"><use href="#zip"/></svg><span class="t" style="left:24.0px;top:673px;font-size:12px;line-height:20px;color:#000;letter-spacing:-0.368px;">NoCube_Undead_Warriors_0.0.3.zip</span><span class="t" style="left:332.0px;top:673px;font-size:12px;line-height:20px;color:#646464;letter-spacing:-0.321px;">2026-01-14 11:01 AM</span><span class="t" style="left:512.0px;top:673px;font-size:12px;line-height:20px;color:#646464;letter-spacing:-0.183px;">Compressed (zipped) F...</span><svg style="left:6px;top:695.5px;" width="16" height="16"><use href="#zip"/></svg><span class="t" style="left:24.0px;top:694px;font-size:12px;line-height:20px;color:#000;letter-spacing:-0.090px;">nu1.Invisible_Equipment.zip</span><span class="t" style="left:332.0px;top:694px;font-size:12px;line-height:20px;color:#646464;letter-spacing:-0.321px;">2026-01-14 10:50 AM</span><span class="t" style="left:512.0px;top:694px;font-size:12px;line-height:20px;color:#646464;letter-spacing:-0.183px;">Compressed (zipped) F...</span><svg style="left:4px;top:716px;" width="16" height="16"><use href="#jar"/></svg><span class="t" style="left:24.0px;top:715px;font-size:12px;line-height:20px;color:#000;letter-spacing:-0.280px;">One_Handed_Lanterns-1.0.0.jar</span><span class="t" style="left:332.0px;top:715px;font-size:12px;line-height:20px;color:#646464;letter-spacing:-0.321px;">2026-01-14 10:40 AM</span><span class="t" style="left:512.0px;top:715px;font-size:12px;line-height:20px;color:#646464;letter-spacing:-0.668px;">JAR File</span><svg style="left:4px;top:737px;" width="16" height="16"><use href="#jar"/></svg><span class="t" style="left:24.0px;top:736px;font-size:12px;line-height:20px;color:#000;letter-spacing:-0.348px;">Overstacked-2026.1.12-30731.jar</span><span class="t" style="left:332.0px;top:736px;font-size:12px;line-height:20px;color:#646464;letter-spacing:-0.321px;">2026-01-14 11:01 AM</span><span class="t" style="left:512.0px;top:736px;font-size:12px;line-height:20px;color:#646464;letter-spacing:-0.668px;">JAR File</span><svg style="left:4px;top:758px;" width="16" height="16"><use href="#jar"/></svg><span class="t" style="left:24.0px;top:757px;font-size:12px;line-height:20px;color:#000;letter-spacing:-0.275px;">party-1.0-SNAPSHOT.jar</span><span class="t" style="left:332.0px;top:757px;font-size:12px;line-height:20px;color:#646464;letter-spacing:-0.321px;">2026-01-14 10:48 AM</span><span class="t" style="left:512.0px;top:757px;font-size:12px;line-height:20px;color:#646464;letter-spacing:-0.668px;">JAR File</span><svg style="left:4px;top:779px;" width="16" height="16"><use href="#jar"/></svg></div><div style="left:941px;top:154px;width:15px;height:819px;background:#f0f0f0;"></div><div style="left:956px;top:154px;width:1px;height:819px;background:#f8f8f8;"></div><svg style="left:943.5px;top:158.5px;" width="10" height="8" viewBox="0 0 10 8"><path d="M1.600 6.500L5 2.900 8.400 6.500" fill="none" stroke="#505050" stroke-width="1.900"/></svg><svg style="left:943.5px;top:960px;" width="10" height="8" viewBox="0 0 10 8"><path d="M1.600 1.500L5 5.100 8.400 1.500" fill="none" stroke="#505050" stroke-width="1.900"/></svg><div style="left:941px;top:171px;width:15px;height:410px;background:#cdcdcd;"></div><div style="left:257px;top:183px;width:686px;height:788px;border:5px solid #22b14c;box-sizing:border-box;"></div><div style="left:272px;top:971px;width:669px;height:2px;background:#d2d2d2;"></div></div><div style="left:957px;top:0px;width:1px;height:973px;background:#b9b9b9;"></div><div style="left:958px;top:0px;width:6px;height:973px;background:#0e0016;"></div><div style="left:963px;top:0px;width:1px;height:973px;background:#3b3640;"></div><div id="br" style="left:964px;top:0;width:953px;height:973px;overflow:hidden;background:#0b141d"><div style="left:0px;top:0px;width:953px;height:11px;background:linear-gradient(90deg,#170c5a 0%,#150d5e 28%,#1c157c 45%,#1b1a8c 56%,#141c88 70%,#0f1a80 100%);"></div><div style="left:0px;top:11px;width:953px;height:36px;background:linear-gradient(90deg,#221765 0%,#281c74 14%,#241a70 30%,#2b1f84 37%,#2a1c80 100%);"></div><div style="left:0;top:11px;width:953px;height:36px;overflow:hidden"><svg style="left:0px;top:0px;" width="953" height="36" viewBox="0 0 953 36"><defs><filter id="b4" x="-20%" y="-50%" width="140%" height="200%"><feGaussianBlur stdDeviation="5"/></filter><filter id="b2" x="-20%" y="-50%" width="140%" height="200%"><feGaussianBlur stdDeviation="2.200"/></filter><filter id="b1"><feGaussianBlur stdDeviation=".8"/></filter>
<linearGradient id="gblue" x1="0" x2="1"><stop offset="0" stop-color="#2a1c80" stop-opacity="0"/><stop offset=".12" stop-color="#1c1f8c"/><stop offset="1" stop-color="#17208a"/></linearGradient></defs>
<rect x="560" y="0" width="393" height="36" fill="url(#gblue)"/>
<ellipse cx="490" cy="46" rx="175" ry="42" fill="#4a35a8" opacity=".5" filter="url(#b4)"/>
<ellipse cx="618" cy="44" rx="42" ry="15" fill="#8058dc" opacity=".75" filter="url(#b4)"/>
<ellipse cx="478" cy="50" rx="142" ry="36" fill="#130f38" filter="url(#b4)"/>
<ellipse cx="470" cy="52" rx="120" ry="30" fill="#130f38" filter="url(#b2)"/>
<path d="M572 27C598 25 622 31 642 39" fill="none" stroke="#e0a8f2" stroke-width="1.800" opacity=".75" filter="url(#b1)"/>
<path d="M335 37L368 23" stroke="#d040d8" stroke-width="3" opacity=".8" filter="url(#b2)"/>
<path d="M345 37l40-14" stroke="#8a3ad0" stroke-width="2" opacity=".5" filter="url(#b1)"/>
<g filter="url(#b1)" stroke="#7a4ae0" stroke-width="1.200" opacity=".65" fill="none"><path d="M23 36l3-14M50 36l2-10M65 36l1-8M140 36l4-12M292 36l2-8M55 36v-6M700 36l2-12M745 36l1-16"/><path d="M780 36v-10M850 36l1-18M870 36v-12M903 36l1-20M925 36v-16" stroke="#5a4ae8"/></g></svg></div><div style="left:4px;top:0px;width:14px;height:1px;background:#fff;border-radius:0 0 6px 6px;height:2px;"></div><div style="left:338px;top:-10px;width:42px;height:17px;border:1px solid #191455;border-radius:9px;box-sizing:border-box;"></div><div style="left:393px;top:0px;width:11px;height:1px;background:#fff;"></div><div style="left:415px;top:0px;width:2px;height:1px;background:#ddd;"></div><div style="left:434px;top:-6px;width:40px;height:14px;background:#1d1a5a;border-radius:8px;"></div><div style="left:447px;top:0px;width:8px;height:2px;background:#b9b7c9;border-radius:0 0 2px 2px;"></div><div style="left:512px;top:0px;width:3px;height:1px;background:#ddd;"></div><div style="left:532px;top:0px;width:10px;height:1px;background:#f4511e;"></div><div style="left:578px;top:0px;width:16px;height:1px;background:#143018;"></div><div style="left:625px;top:0px;width:10px;height:1px;background:#f4511e;"></div><div style="left:784px;top:-4px;width:21px;height:7px;border:1px solid #8d8ad0;border-radius:3px;box-sizing:border-box;"></div><svg style="left:13.5px;top:21.5px;" width="15.5" height="15.5"><use href="#broccs"/></svg><span class="t" style="left:34.0px;top:20px;font-size:12px;line-height:20px;color:#fff;letter-spacing:0.037px;width:125px;overflow:hidden;-webkit-mask-image:linear-gradient(90deg,#000 84%,rgba(0,0,0,.15) 100%);mask-image:linear-gradient(90deg,#000 84%,rgba(0,0,0,.15) 100%);">Control Panel -- Indiffer</span><div style="left:161px;top:14px;width:155px;height:30px;background:#1a1749;border-radius:15px;"></div><svg style="left:168.5px;top:21.5px;" width="16" height="16"><use href="#broccs"/></svg><span class="t" style="left:189.0px;top:20px;font-size:12px;line-height:20px;color:#fff;letter-spacing:0.012px;width:123px;overflow:hidden;-webkit-mask-image:linear-gradient(90deg,#000 85%,rgba(0,0,0,.15) 100%);mask-image:linear-gradient(90deg,#000 85%,rgba(0,0,0,.15) 100%);">mods - Files - indifferer</span><svg style="left:378px;top:24px;" width="12" height="12" viewBox="0 0 12 12"><path d="M6 .5v11M.5 6h11" stroke="#fff" stroke-width="1.500"/></svg><svg style="left:930px;top:22px;" width="12" height="13" viewBox="0 0 12 13"><rect x=".5" y="6" width="10" height="6.500" rx="1" fill="#fff"/><path d="M2.200 6V3.500A2.800 2.800 0 0 1 7.500 2.500" fill="none" stroke="#fff" stroke-width="1.500"/></svg><div style="left:0px;top:47px;width:953px;height:41px;background:#1a1749;"></div><div style="left:0px;top:87px;width:953px;height:1px;background:#211c5e;"></div><svg style="left:11px;top:58px;" width="18" height="18" viewBox="0 0 18 18"><g filter="url(#glow)" fill="none" stroke="#e9e2ff" stroke-width="1.500" stroke-linecap="round" stroke-linejoin="round"><rect x="1.500" y="2.500" width="15" height="12" rx="3"/><path d="M4.800 5v7"/></g></svg><svg style="left:80px;top:57px;" width="18" height="20" viewBox="0 0 18 20"><g filter="url(#glow)" fill="none" stroke="#e9e2ff" stroke-width="1.500" stroke-linecap="round" stroke-linejoin="round"><path d="M12.500 2.500L5.500 10l7 7.500" stroke-width="1.700"/></g></svg><svg style="left:119px;top:57px;" width="18" height="20" viewBox="0 0 18 20"><g opacity=".55"><g filter="url(#glow)" fill="none" stroke="#e9e2ff" stroke-width="1.500" stroke-linecap="round" stroke-linejoin="round"><path d="M5.500 2.500L12.500 10l-7 7.500" stroke-width="1.700"/></g></g></svg><svg style="left:155px;top:57px;" width="20" height="20" viewBox="0 0 20 20"><g filter="url(#glow)" fill="none" stroke="#e9e2ff" stroke-width="1.500" stroke-linecap="round" stroke-linejoin="round"><path d="M16.200 7.500A7 7 0 1 0 17 11" stroke-width="1.700"/><path d="M16.800 2.500v5.200h-5.200" stroke-width="1.700"/></g></svg><div style="left:187px;top:52px;width:440px;height:30px;background:#040220;border-radius:15px;"></div><svg style="left:194px;top:58px;" width="16" height="18" viewBox="0 0 16 18"><path d="M8 1.500l5.500 2v5c0 3.500-2.500 6-5.500 7.500-3-1.500-5.500-4-5.500-7.500v-5z" fill="none" stroke="#b9acec" stroke-width="1.100"/><path d="M1.500 16L14.500 1.500" stroke="#b9acec" stroke-width="1.100"/></svg><svg style="left:219px;top:59px;" width="16" height="16" viewBox="0 0 16 16"><circle cx="8" cy="8" r="6.800" fill="none" stroke="#cfc3ff" stroke-width="1.200"/><path d="M8 7.200v4.300" stroke="#cfc3ff" stroke-width="1.600"/><circle cx="8" cy="4.800" r="1" fill="#cfc3ff"/></svg><span class="t" style="left:241.0px;top:57px;font-size:13px;line-height:20px;color:#d6cbff;letter-spacing:-0.805px;">Not Secure</span><span class="t" style="left:307.0px;top:57px;font-size:13px;line-height:20px;color:#f4efff;letter-spacing:-0.384px;-webkit-text-stroke:.3px #f4efff;">172.240.18.203</span><span class="t" style="left:392.0px;top:57px;font-size:13px;line-height:20px;color:#9a91c9;letter-spacing:0.249px;">:27182/files/mods/</span><svg style="left:607px;top:59.5px;" width="10" height="15" viewBox="0 0 10 15"><path d="M1.200 1h7.600v12l-3.800-3.200-3.800 3.200z" fill="none" stroke="#cdbdff" stroke-width="1.200"/></svg><svg style="left:672px;top:58px;" width="16" height="18" viewBox="0 0 16 18"><path d="M8 .8l7 2.400v5.300c0 4-3 6.800-7 8.500-4-1.700-7-4.500-7-8.500V3.200z" fill="#9e9e9e"/><rect x="3.800" y="7" width="8.400" height="2.200" fill="#fff"/></svg><svg style="left:709px;top:59px;" width="16" height="16" viewBox="0 0 16 16"><rect x=".5" y=".5" width="15" height="15" rx="3" fill="#3f3b55" stroke="#b9b5cf"/><path d="M.5 9h15" stroke="#b9b5cf" stroke-width=".5"/><path d="M2 12.500l3-2.500 3 2.500 3-2.500 3 2.500-3 2.500-3-2.500-3 2.500z" fill="none" stroke="#e8e6f5" stroke-width=".9"/></svg><div style="left:746px;top:59px;width:16px;height:16px;background:linear-gradient(180deg,#e0197d,#b5238f);border-radius:2.500px;"></div><span class="t" style="left:748.0px;top:59px;font-size:9.5px;line-height:16px;color:#fff;letter-spacing:-0.070px;font-weight:700;">SL</span><svg style="left:783px;top:59px;" width="16" height="16" viewBox="0 0 16 16"><rect width="16" height="16" rx="2.500" fill="#175ddc"/><path d="M8 2.500l4.800 1.300v4c0 2.800-2 4.700-4.800 5.900-2.800-1.200-4.800-3.100-4.800-5.900v-4z" fill="#fff"/><path d="M8 3.800v8.600c-2-.9-3.500-2.400-3.500-4.600v-3z" fill="#175ddc"/></svg><div style="left:795px;top:53px;width:14px;height:14px;background:#2b4a5c;border-radius:7px;"></div><span class="t" style="left:799.2px;top:53px;font-size:10px;line-height:14px;color:#fff;letter-spacing:-0.062px;font-weight:700;">1</span><svg style="left:820px;top:59px;" width="16" height="16" viewBox="0 0 16 16"><rect width="16" height="16" fill="#d0000c"/><path d="M2.500 12.800l7-7 1.300 1.300-7 7z" fill="#fff"/><path d="M11.500 2.500v2M10.500 3.500h2M13.500 6v1.600M12.700 6.800h1.600M8 2.200v1.200M7.400 2.800h1.200" stroke="#fff" stroke-width=".7"/></svg><svg style="left:856px;top:57px;" width="20" height="20" viewBox="0 0 20 20"><g filter="url(#glow)" fill="#bfb2f5" fill-opacity=".4" stroke="#e9e2ff" stroke-width="1.300"><rect x="2.500" y="7.500" width="4.700" height="4.700" rx=".8"/><rect x="2.500" y="13" width="4.700" height="4.700" rx=".8"/><rect x="8" y="13" width="4.700" height="4.700" rx=".8"/><rect x="11" y="3" width="5.200" height="5.200" rx=".8"/></g></svg><div style="left:888px;top:56px;width:22px;height:22px;background:#fff;border-radius:5.500px;"></div><svg style="left:891px;top:59px;" width="16" height="16" viewBox="0 0 16 16"><g fill="none" stroke="#1d1a55" stroke-width="1.200"><rect x="1" y="4.500" width="14" height="3.200" rx=".8"/><path d="M2.200 7.700v5.800c0 .6.400 1 1 1h9.600c.6 0 1-.4 1-1V7.700M8 4.500v10"/><path d="M8 4.500C6.500 4.500 4.800 3.800 4.800 2.600 4.800 1.400 6.800 1.200 8 4.500zM8 4.500c1.500 0 3.200-.7 3.200-1.900C11.200 1.400 9.200 1.200 8 4.500z"/></g></svg><svg style="left:922px;top:53px;" width="28" height="28" viewBox="0 0 28 28"><circle cx="14" cy="14" r="14" fill="url(#gava)"/><path d="M14 3v22M3 14h22M6 6l16 16M22 6L6 22" stroke="#fff" stroke-opacity=".35" stroke-width=".8"/><circle cx="14" cy="14" r="3" fill="#fff" filter="url(#glow)"/></svg><div style="left:0px;top:88px;width:41px;height:885px;background:linear-gradient(180deg,#150a40 0%,#130b44 45%,#170c48 65%,#2a1258 85%,#341a60 100%);"></div><div style="left:0px;top:560px;width:41px;height:413px;background:radial-gradient(ellipse 34px 170px at 100% 45%,rgba(100,18,120,.38),rgba(100,18,120,0) 100%);"></div><div style="left:38.5px;top:540px;width:2.5px;height:433px;background:linear-gradient(180deg,rgba(120,14,110,0) 0%,rgba(120,14,110,.75) 22%,rgba(100,20,110,.6) 70%,rgba(90,30,110,.35) 100%);"></div><svg style="left:10.0px;top:100.0px;" width="20" height="20" viewBox="0 0 20 20"><g filter="url(#glow)" fill="none" stroke="#e9e2ff" stroke-width="1.500" stroke-linecap="round" stroke-linejoin="round"><path d="M5.500 3h9v14l-4.500-4-4.500 4z" stroke-width="1.700"/></g></svg><svg style="left:10.0px;top:138.0px;" width="20" height="20" viewBox="0 0 20 20"><g filter="url(#glow)" fill="none" stroke="#e9e2ff" stroke-width="1.500" stroke-linecap="round" stroke-linejoin="round"><path d="M10 2.500v9M6 8l4 4 4-4M3.500 13v3.500h13V13" stroke-width="1.600"/></g></svg><svg style="left:10.0px;top:175.0px;" width="20" height="20" viewBox="0 0 20 20"><g filter="url(#glow)" fill="none" stroke="#e9e2ff" stroke-width="1.500" stroke-linecap="round" stroke-linejoin="round"><rect x="2.500" y="3.500" width="15" height="13" rx="5"/><path d="M10 6.500V10l2 2"/></g></svg><svg style="left:10.0px;top:212.0px;" width="20" height="20" viewBox="0 0 20 20"><g filter="url(#glow)" fill="none" stroke="#e9e2ff" stroke-width="1.500" stroke-linecap="round" stroke-linejoin="round"><path d="M9 4.500H5.500a2 2 0 0 0-2 2v8a2 2 0 0 0 2 2h8a2 2 0 0 0 2-2V11"/><path d="M8 12.500l.7-2.800L15.500 3l2 2-6.700 6.800z" stroke-width="1.300"/></g></svg><svg style="left:10.0px;top:249.0px;" width="20" height="20" viewBox="0 0 20 20"><g filter="url(#glow)" fill="none" stroke="#e9e2ff" stroke-width="1.500" stroke-linecap="round" stroke-linejoin="round"><path d="M2.500 16.500L6.500 6.500l4 10M4 13h5" stroke-width="1.500"/><path d="M10 4.500h8M14 3v1.500M16.500 4.500c-.5 3-3 5.500-5.500 6.500M12 6.500c1 2 3 4 5.500 4.500" stroke-width="1.200"/></g></svg><svg style="left:10.0px;top:286.0px;" width="20" height="20" viewBox="0 0 20 20"><g filter="url(#glow)" fill="none" stroke="#e9e2ff" stroke-width="1.500" stroke-linecap="round" stroke-linejoin="round"><rect x="2.500" y="4" width="15" height="12" rx="2.500"/><path d="M2.500 8h15" stroke-width="2"/></g></svg><svg style="left:10.0px;top:323.0px;" width="20" height="20" viewBox="0 0 20 20"><g filter="url(#glow)" fill="none" stroke="#e9e2ff" stroke-width="1.500" stroke-linecap="round" stroke-linejoin="round"><path d="M10 5C8 3.800 5 3.500 2.500 4v11.500c2.500-.5 5.500-.2 7.500 1 2-1.200 5-1.500 7.500-1V4C15 3.500 12 3.800 10 5zM10 5v11.500"/><path d="M4.500 7h3.500M4.500 9.500h3.500M4.500 12h3.500M12 7h3.500M12 9.500h3.500M12 12h3.500" stroke-width=".9"/></g></svg><div style="left:12px;top:360px;width:16px;height:1px;background:#47417a;"></div><svg style="left:10.0px;top:376.0px;" width="20" height="20" viewBox="0 0 20 20"><path d="M10 2c4.500 0 7.500 1 7.500 5.500 0 5-1 7.500-4 8-2 .4-4 .3-6.500-.3 0 1.500 1.500 2 3.500 2 1.500 0 2.500-.3 3.500-.6v1.600c-1.500.7-3.500 1-5.500.8-4-.4-6-2.500-6-8V7.500C2.500 3 5.500 2 10 2z" fill="#6364ff"/><path d="M6.200 11.500V7.800c0-1.300.7-2.100 1.800-2.100 1.200 0 2 .8 2 2.100V9.500M13.800 11.500V7.800c0-1.300-.7-2.100-1.800-2.100-1.200 0-2 .8-2 2.100" fill="none" stroke="#fff" stroke-width="1.500"/></svg><svg style="left:10.0px;top:414.0px;" width="20" height="20" viewBox="0 0 20 20"><path d="M5.500 4h6l3 3v9h-9z" fill="#f2f2f2"/><path d="M11.500 4v3h3z" fill="#bdbdbd"/></svg><span class="t" style="left:12.9px;top:450px;font-size:15px;line-height:20px;color:#05040c;font-family:"Liberation Serif",serif;">W</span><svg style="left:10.0px;top:487.0px;" width="20" height="20" viewBox="0 0 20 20"><g filter="url(#glow)" fill="none" stroke="#e9e2ff" stroke-width="1.500" stroke-linecap="round" stroke-linejoin="round"><rect x="2.500" y="2.500" width="15" height="15" rx="3"/><path d="M10 6v8M6 10h8" stroke-width="1.800"/></g></svg><div style="left:41px;top:150px;width:900px;height:1px;background:#0e1923;"></div><svg style="left:59px;top:102px;" width="36" height="36"><use href="#brocc"/></svg><div style="left:113px;top:96px;width:399px;height:47px;background:#14273b;border-radius:4px;"></div><svg style="left:124.5px;top:107.5px" width="25" height="25" viewBox="0 0 24 24"><path d="M15.500 14h-.79l-.28-.27C15.410 12.590 16 11.110 16 9.500 16 5.910 13.090 3 9.500 3S3 5.910 3 9.500 5.910 16 9.500 16c1.610 0 3.090-.59 4.230-1.570l.27.28v.79l5 4.990L20.490 19l-4.990-5zm-6 0C7.010 14 5 11.990 5 9.500S7.010 5 9.500 5 14 7.010 14 9.500 11.990 14 9.500 14z" fill="#3b3a3c"/></svg><span class="t dv" style="left:157.0px;top:107.5px;font-size:16px;line-height:22px;color:#3c3b3d;letter-spacing:-0.231px;">Search...</span><svg style="left:725.9000000000001px;top:107.5px" width="25" height="25" viewBox="0 0 24 24"><path d="M4 11h5V5H4v6zm0 7h5v-6H4v6zm6 0h5v-6h-5v6zm6 0h5v-6h-5v6zm-6-7h5V5h-5v6zm6-6v6h5V5h-5z" fill="#546e7a"/></svg><svg style="left:769.3px;top:107.5px" width="25" height="25" viewBox="0 0 24 24"><path d="M19 9h-4V3H9v6H5l7 7 7-7zM5 18v2h14v-2H5z" fill="#546e7a"/></svg><svg style="left:812.7px;top:107.5px" width="25" height="25" viewBox="0 0 24 24"><path d="M9 16h6v-6h4l-7-7-7 7h4zm-4 2h14v2H5z" fill="#546e7a"/></svg><svg style="left:855.8px;top:107.5px" width="25" height="25" viewBox="0 0 24 24"><path d="M12 2C6.480 2 2 6.480 2 12s4.480 10 10 10 10-4.480 10-10S17.520 2 12 2zm1 15h-2v-6h2v6zm0-8h-2V7h2v2z" fill="#546e7a"/></svg><svg style="left:899.0px;top:107.5px" width="25" height="25" viewBox="0 0 24 24"><path d="M12 2C6.480 2 2 6.480 2 12s4.480 10 10 10 10-4.480 10-10S17.520 2 12 2zm-2 15l-5-5 1.410-1.410L10 14.170l7.590-7.590L19 8l-9 9z" fill="#546e7a"/></svg><svg style="left:58.5px;top:169px" width="25" height="25" viewBox="0 0 24 24"><path d="M12 12c2.210 0 4-1.790 4-4s-1.790-4-4-4-4 1.790-4 4 1.790 4 4 4zm0 2c-2.670 0-8 1.340-8 4v2h16v-2c0-2.660-5.330-4-8-4z" fill="#546e7a"/></svg><span class="t dv" style="left:93.0px;top:170px;font-size:17.5px;line-height:24px;color:#546e7a;letter-spacing:0.058px;">flfEOMTl...</span><svg style="left:58.5px;top:230.5px" width="25" height="25" viewBox="0 0 24 24"><path d="M10 4H4c-1.1 0-1.990.9-1.990 2L2 18c0 1.100.9 2 2 2h16c1.100 0 2-.9 2-2V8c0-1.100-.9-2-2-2h-8l-2-2z" fill="#546e7a"/></svg><span class="t dv" style="left:93.0px;top:231px;font-size:17.5px;line-height:24px;color:#546e7a;letter-spacing:-0.037px;">My files</span><div style="left:41px;top:273.5px;width:160px;height:1px;background:#0e1822;"></div><svg style="left:58.5px;top:291.5px" width="25" height="25" viewBox="0 0 24 24"><path d="M20 6h-8l-2-2H4c-1.110 0-1.990.89-1.990 2L2 18c0 1.110.89 2 2 2h16c1.110 0 2-.89 2-2V8c0-1.110-.89-2-2-2zm-1 8h-3v3h-2v-3h-3v-2h3V9h2v3h3v2z" fill="#546e7a"/></svg><span class="t dv" style="left:93.0px;top:292px;font-size:17.5px;line-height:24px;color:#546e7a;letter-spacing:0.395px;">New folder</span><div style="left:41px;top:334.5px;width:160px;height:1px;background:#0e1822;"></div><svg style="left:58.5px;top:352.5px" width="25" height="25" viewBox="0 0 24 24"><path d="M14 2H6c-1.100 0-1.990.9-1.990 2L4 20c0 1.100.89 2 1.990 2H18c1.100 0 2-.9 2-2V8l-6-6zm2 14h-3v3h-2v-3H8v-2h3v-3h2v3h3v2zm-3-7V3.500L18.500 9H13z" fill="#546e7a"/></svg><span class="t dv" style="left:93.0px;top:353px;font-size:17.5px;line-height:24px;color:#546e7a;letter-spacing:0.264px;">New file</span><span class="t" style="left:65.0px;top:422px;font-size:10.5px;line-height:15px;color:#8d999f;letter-spacing:-0.350px;font-weight:700;">File Browser 2.51.2</span><span class="t" style="left:65.0px;top:436px;font-size:10.5px;line-height:15px;color:#8d999f;letter-spacing:-0.066px;font-weight:700;">Help</span><svg style="left:233.4000000000001px;top:160.5px" width="24" height="24" viewBox="0 0 24 24"><path d="M10 20v-6h4v6h5v-8h3L12 3 2 12h3v8z" fill="#8a8a8a"/></svg><svg style="left:256.79999999999995px;top:161.5px" width="24" height="24" viewBox="0 0 24 24"><path d="M8.590 16.590L13.170 12 8.590 7.410 10 6l6 6-6 6z" fill="#82786f"/></svg><div style="left:277px;top:157px;width:68px;height:37px;border:5px solid #22b14c;box-sizing:border-box;"></div><span class="t dv" style="left:285.0px;top:163px;font-size:16.5px;line-height:24px;color:#8a8782;letter-spacing:-0.062px;">mods</span><div style="left:233px;top:200px;width:692px;height:773px;background:#15283c;"></div><span class="t dv" style="left:247.0px;top:218px;font-size:16px;line-height:24px;color:#868584;letter-spacing:0.449px;-webkit-text-stroke:1px #868584;">Name</span><svg style="left:302.79999999999995px;top:214.3px" width="31.5" height="31.5" viewBox="0 0 24 24"><path d="M4 12l1.410 1.410L11 7.830V20h2V7.830l5.580 5.590L20 12l-8-8-8 8z" fill="#868584"/></svg><span class="t dv" style="left:603.0px;top:216.5px;font-size:14px;line-height:24px;color:#868584;letter-spacing:0.438px;">Size</span><span class="t dv" style="left:758.0px;top:216.5px;font-size:14px;line-height:24px;color:#868584;letter-spacing:0.275px;">Last modified</span><div style="left:233px;top:259px;width:692px;height:1px;background:#10202f;"></div><svg style="left:249.29999999999995px;top:275.7px" width="32.7" height="32.7" viewBox="0 0 24 24"><path d="M10 4H4c-1.1 0-1.990.9-1.990 2L2 18c0 1.100.9 2 2 2h16c1.100 0 2-.9 2-2V8c0-1.100-.9-2-2-2h-8l-2-2z" fill="#2196f3"/></svg><span class="t dv" style="left:298.7px;top:279.5px;font-size:16px;line-height:24px;color:#868584;letter-spacing:0.171px;">arcilance_SleepPercentage</span><span class="t dv" style="left:603.0px;top:281px;font-size:13px;line-height:24px;color:#868584;">—</span><span class="t dv" style="left:756.5px;top:280px;font-size:14.5px;line-height:24px;color:#868584;letter-spacing:-0.278px;">5 minutes ago</span><div style="left:233px;top:324px;width:692px;height:1px;background:#10202f;"></div><svg style="left:249.29999999999995px;top:340.7px" width="32.7" height="32.7" viewBox="0 0 24 24"><path d="M10 4H4c-1.1 0-1.990.9-1.990 2L2 18c0 1.100.9 2 2 2h16c1.100 0 2-.9 2-2V8c0-1.100-.9-2-2-2h-8l-2-2z" fill="#2196f3"/></svg><span class="t dv" style="left:298.7px;top:344.5px;font-size:16px;line-height:24px;color:#868584;letter-spacing:-0.138px;">Buuz135_LuckyMining</span><span class="t dv" style="left:603.0px;top:346px;font-size:13px;line-height:24px;color:#868584;">—</span><span class="t dv" style="left:756.5px;top:345px;font-size:14.5px;line-height:24px;color:#868584;letter-spacing:-0.278px;">5 minutes ago</span><div style="left:233px;top:389px;width:692px;height:1px;background:#10202f;"></div><svg style="left:249.29999999999995px;top:405.7px" width="32.7" height="32.7" viewBox="0 0 24 24"><path d="M10 4H4c-1.1 0-1.990.9-1.990 2L2 18c0 1.100.9 2 2 2h16c1.100 0 2-.9 2-2V8c0-1.100-.9-2-2-2h-8l-2-2z" fill="#2196f3"/></svg><span class="t dv" style="left:298.7px;top:409.5px;font-size:16px;line-height:24px;color:#868584;">Darkhax_Overstacked</span><span class="t dv" style="left:603.0px;top:411px;font-size:13px;line-height:24px;color:#868584;">—</span><span class="t dv" style="left:756.5px;top:410px;font-size:14.5px;line-height:24px;color:#868584;letter-spacing:-0.278px;">5 minutes ago</span><div style="left:233px;top:454px;width:692px;height:1px;background:#10202f;"></div><svg style="left:249.29999999999995px;top:470.7px" width="32.7" height="32.7" viewBox="0 0 24 24"><path d="M10 4H4c-1.1 0-1.990.9-1.990 2L2 18c0 1.100.9 2 2 2h16c1.100 0 2-.9 2-2V8c0-1.100-.9-2-2-2h-8l-2-2z" fill="#2196f3"/></svg><span class="t dv" style="left:298.7px;top:474.5px;font-size:16px;line-height:24px;color:#868584;letter-spacing:0.304px;">Hybrowse_AutoMessages</span><span class="t dv" style="left:603.0px;top:476px;font-size:13px;line-height:24px;color:#868584;">—</span><span class="t dv" style="left:756.5px;top:475px;font-size:14.5px;line-height:24px;color:#868584;letter-spacing:-0.278px;">5 minutes ago</span><div style="left:233px;top:519px;width:692px;height:1px;background:#10202f;"></div><svg style="left:249.29999999999995px;top:535.7px" width="32.7" height="32.7" viewBox="0 0 24 24"><path d="M10 4H4c-1.1 0-1.990.9-1.990 2L2 18c0 1.100.9 2 2 2h16c1.100 0 2-.9 2-2V8c0-1.100-.9-2-2-2h-8l-2-2z" fill="#2196f3"/></svg><span class="t dv" style="left:298.7px;top:539.5px;font-size:16px;line-height:24px;color:#868584;letter-spacing:0.199px;">Hytale_Shop</span><span class="t dv" style="left:603.0px;top:541px;font-size:13px;line-height:24px;color:#868584;">—</span><span class="t dv" style="left:756.5px;top:540px;font-size:14.5px;line-height:24px;color:#868584;letter-spacing:-0.278px;">7 minutes ago</span><div style="left:233px;top:584px;width:692px;height:1px;background:#10202f;"></div><svg style="left:249.29999999999995px;top:600.7px" width="32.7" height="32.7" viewBox="0 0 24 24"><path d="M10 4H4c-1.1 0-1.990.9-1.990 2L2 18c0 1.100.9 2 2 2h16c1.100 0 2-.9 2-2V8c0-1.100-.9-2-2-2h-8l-2-2z" fill="#2196f3"/></svg><span class="t dv" style="left:298.7px;top:604.5px;font-size:16px;line-height:24px;color:#868584;letter-spacing:0.088px;">Linceros_GrabFromFar</span><span class="t dv" style="left:603.0px;top:606px;font-size:13px;line-height:24px;color:#868584;">—</span><span class="t dv" style="left:756.5px;top:605px;font-size:14.5px;line-height:24px;color:#868584;letter-spacing:-0.278px;">5 minutes ago</span><div style="left:233px;top:649px;width:692px;height:1px;background:#10202f;"></div><svg style="left:249.29999999999995px;top:665.7px" width="32.7" height="32.7" viewBox="0 0 24 24"><path d="M10 4H4c-1.1 0-1.990.9-1.990 2L2 18c0 1.100.9 2 2 2h16c1.100 0 2-.9 2-2V8c0-1.100-.9-2-2-2h-8l-2-2z" fill="#2196f3"/></svg><span class="t dv" style="left:298.7px;top:669.5px;font-size:16px;line-height:24px;color:#868584;letter-spacing:0.233px;">Serilum_Hybrid</span><span class="t dv" style="left:603.0px;top:671px;font-size:13px;line-height:24px;color:#868584;">—</span><span class="t dv" style="left:756.5px;top:670px;font-size:14.5px;line-height:24px;color:#868584;letter-spacing:-0.278px;">5 minutes ago</span><div style="left:233px;top:714px;width:692px;height:1px;background:#10202f;"></div><svg style="left:249.29999999999995px;top:730.7px" width="32.7" height="32.7" viewBox="0 0 24 24"><path d="M10 4H4c-1.1 0-1.990.9-1.990 2L2 18c0 1.100.9 2 2 2h16c1.100 0 2-.9 2-2V8c0-1.100-.9-2-2-2h-8l-2-2z" fill="#2196f3"/></svg><span class="t dv" style="left:298.7px;top:734.5px;font-size:16px;line-height:24px;color:#868584;letter-spacing:0.014px;">Serilum_TreeHarvester</span><span class="t dv" style="left:603.0px;top:736px;font-size:13px;line-height:24px;color:#868584;">—</span><span class="t dv" style="left:756.5px;top:735px;font-size:14.5px;line-height:24px;color:#868584;letter-spacing:-0.278px;">5 minutes ago</span><div style="left:233px;top:779px;width:692px;height:1px;background:#10202f;"></div><svg style="left:249.29999999999995px;top:795.7px" width="32.7" height="32.7" viewBox="0 0 24 24"><path d="M20 6h-8l-2-2H4c-1.100 0-2 .9-2 2v12c0 1.100.9 2 2 2h16c1.100 0 2-.9 2-2V8c0-1.100-.9-2-2-2zm-2 6h-2v2h2v2h-2v2h-2v-2h2v-2h-2v-2h2v-2h-2V8h4v4z" fill="#ffb74d"/></svg><span class="t dv" style="left:298.7px;top:799.5px;font-size:16px;line-height:24px;color:#868584;letter-spacing:-0.050px;">'Dustrial Decor.zip</span><span class="t dv" style="left:603.0px;top:800px;font-size:14.5px;line-height:24px;color:#868584;letter-spacing:-0.384px;">275.39 KiB</span><span class="t dv" style="left:756.5px;top:800px;font-size:14.5px;line-height:24px;color:#868584;letter-spacing:-0.278px;">5 minutes ago</span><div style="left:233px;top:844px;width:692px;height:1px;background:#10202f;"></div><svg style="left:250.29999999999995px;top:860.7px" width="32.7" height="32.7" viewBox="0 0 24 24"><path d="M19 4H5c-1.110 0-2 .9-2 2v12c0 1.100.89 2 2 2h14c1.100 0 2-.9 2-2V6c0-1.100-.89-2-2-2zm0 14H5V8h14v10z" fill="#e0485a"/></svg><span class="t dv" style="left:298.7px;top:864.5px;font-size:16px;line-height:24px;color:#868584;letter-spacing:-0.165px;">AdminUI-1.0.1.jar</span><span class="t dv" style="left:603.0px;top:865px;font-size:14.5px;line-height:24px;color:#868584;letter-spacing:-0.584px;">133.26 KiB</span><span class="t dv" style="left:756.5px;top:865px;font-size:14.5px;line-height:24px;color:#868584;letter-spacing:-0.278px;">5 minutes ago</span><div style="left:233px;top:909px;width:692px;height:1px;background:#10202f;"></div><svg style="left:250.29999999999995px;top:925.7px" width="32.7" height="32.7" viewBox="0 0 24 24"><path d="M19 4H5c-1.110 0-2 .9-2 2v12c0 1.100.89 2 2 2h14c1.100 0 2-.9 2-2V6c0-1.100-.89-2-2-2zm0 14H5V8h14v10z" fill="#e0485a"/></svg><span class="t dv" style="left:298.7px;top:929.5px;font-size:16px;line-height:24px;color:#868584;letter-spacing:0.072px;">AdvancedItemInfo-1.0.4.jar</span><span class="t dv" style="left:603.0px;top:930px;font-size:14.5px;line-height:24px;color:#868584;letter-spacing:-0.623px;">18.47 KiB</span><span class="t dv" style="left:756.5px;top:930px;font-size:14.5px;line-height:24px;color:#868584;letter-spacing:-0.278px;">5 minutes ago</span><div style="left:941px;top:88px;width:12px;height:885px;background:#fff;"></div><svg style="left:942px;top:94px;" width="11" height="6" viewBox="0 0 11 6"><path d="M0 5.500L5.500 0 11 5.500z" fill="#a3a3a3"/></svg><svg style="left:942px;top:963px;" width="11" height="6" viewBox="0 0 11 6"><path d="M0 0L5.500 5.500 11 0z" fill="#a3a3a3"/></svg><div style="left:944px;top:106px;width:12px;height:264px;background:#8f8f8f;border-radius:4px;"></div></div><svg style="left:950px;top:520px;" width="125" height="120" viewBox="0 0 125 120"><path d="M5 34h54V9.500L117.500 60.500 59 111.500V88H5z" fill="#22b14c" stroke="#22b14c" stroke-width="2" stroke-linejoin="round"/></svg></body></html>
